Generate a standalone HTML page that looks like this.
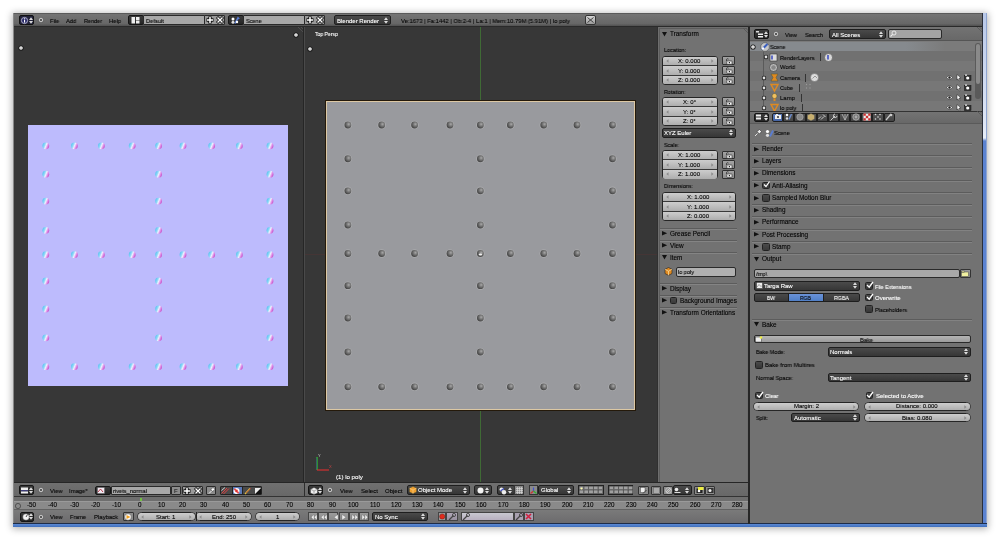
<!DOCTYPE html>
<html><head><meta charset="utf-8"><style>
*{box-sizing:border-box;margin:0;padding:0}
html,body{width:1000px;height:540px;overflow:hidden;background:#fff}
body{font-family:"Liberation Sans",sans-serif;font-size:6px;color:#000;position:relative}
.a{position:absolute}
.t{position:absolute;white-space:nowrap;line-height:1;will-change:transform;-webkit-text-stroke-width:0.1px}
svg{position:absolute;overflow:visible}
</style></head><body>
<div class="a" style="left:13px;top:13px;width:974px;height:514px;background:#888;box-shadow:0 1px 7px 1px rgba(0,0,0,.30)"></div>
<div class="a" style="left:982px;top:13px;width:1px;height:511px;background:#2a2e38;"></div>
<div class="a" style="left:983px;top:13px;width:4px;height:511px;background:linear-gradient(#b8c8e8 0,#dfe6f4 110px,#e8eef8 125px,#5a82d0 128px,#5a82d0 100%);border-right:1px solid #8ea4d0"></div>
<div class="a" style="left:13px;top:523px;width:974px;height:1px;background:#1e2c48;"></div>
<div class="a" style="left:13px;top:524px;width:974px;height:3px;background:linear-gradient(#5d8ad4,#3f6fbd)"></div>
<div class="a" style="left:14px;top:13px;width:968px;height:510px;background:#727272;"></div>
<div class="a" style="left:14px;top:13px;width:968px;height:14px;background:linear-gradient(#747474,#676767 80%,#505050);border-top:1px solid #5a5a5a;border-bottom:1px solid #2a2a2a"></div>
<div class="a" style="left:19px;top:15px;width:15px;height:10px;background:#22223a;border:1px solid #111;border-radius:2px"></div>
<svg style="left:21px;top:16.5px" width="7" height="7"><circle cx="3.5" cy="3.5" r="3.1" fill="#2c2c6a" stroke="#c8c8e0" stroke-width="0.8"/><rect x="3" y="2.8" width="1.1" height="2.8" fill="#fff"/><rect x="3" y="1.3" width="1.1" height="1" fill="#fff"/></svg>
<svg style="left:29px;top:16.5px" width="4" height="7"><path d="M0 3 L2 0.3 L4 3Z M0 4 L2 6.7 L4 4Z" fill="#ddd"/></svg>
<svg style="left:37px;top:16.2px" width="8" height="8"><circle cx="4" cy="4" r="2.6" fill="#3a3a3a" opacity="0.5"/><circle cx="4" cy="4" r="1.8" fill="#5a5a5a" stroke="#e0e0e0" stroke-width="0.9"/></svg>
<div class="t" style="left:50.00px;top:17.92px;font-size:6px;color:#000;transform:scaleX(0.951);transform-origin:0 0;">File</div>
<div class="t" style="left:66.40px;top:17.92px;font-size:6px;color:#000;transform:scaleX(0.954);transform-origin:0 0;">Add</div>
<div class="t" style="left:83.80px;top:17.92px;font-size:6px;color:#000;transform:scaleX(0.914);transform-origin:0 0;">Render</div>
<div class="t" style="left:109.00px;top:17.92px;font-size:6px;color:#000;transform:scaleX(0.972);transform-origin:0 0;">Help</div>
<div class="a" style="left:128px;top:15px;width:16px;height:10px;background:linear-gradient(#3a3a3a,#262626);border:1px solid #151515;border-radius:2px;"></div>
<svg style="left:131px;top:17px" width="10" height="7"><rect x="0.5" y="0" width="3.5" height="6.5" fill="#eee"/><rect x="5" y="0" width="3.5" height="3" fill="#eee"/><rect x="5" y="3.5" width="3.5" height="3" fill="#eee"/></svg>
<div class="a" style="left:143px;top:15px;width:62px;height:10px;background:linear-gradient(#a8a8a8,#a8a8a8);border:1px solid #2a2a2a;border-radius:1px;"></div>
<div class="t" style="left:146.00px;top:17.92px;font-size:6px;color:#000;transform:scaleX(0.947);transform-origin:0 0;">Default</div>
<div class="a" style="left:204px;top:15px;width:21px;height:10px;background:linear-gradient(#9a9a9a,#9a9a9a);border:1px solid #2a2a2a;border-radius:1px;"></div>
<svg style="left:204.5px;top:14.5px" width="10" height="10"><path d="M5 1.5V8.5M1.5 5H8.5" stroke="#111" stroke-width="3.4"/><path d="M5 2V8M2 5H8" stroke="#fff" stroke-width="1.5"/></svg>
<svg style="left:214.5px;top:14.5px" width="10" height="10"><path d="M2 2L8 8M8 2L2 8" stroke="#111" stroke-width="3"/><path d="M2.5 2.5L7.5 7.5M7.5 2.5L2.5 7.5" stroke="#fff" stroke-width="1.4"/></svg>
<div class="a" style="left:228px;top:15px;width:16px;height:10px;background:linear-gradient(#3a3a3a,#262626);border:1px solid #151515;border-radius:2px;"></div>
<svg style="left:231px;top:16.5px" width="9" height="7"><circle cx="2" cy="2" r="1.5" fill="#fff"/><circle cx="2" cy="5.3" r="1.5" fill="#ddd"/><path d="M4 6.5L7 0.8L8.2 2" stroke="#5a7cd0" stroke-width="1.6" fill="none"/><circle cx="6" cy="5" r="1.2" fill="#fff"/></svg>
<div class="a" style="left:243px;top:15px;width:62px;height:10px;background:linear-gradient(#a8a8a8,#a8a8a8);border:1px solid #2a2a2a;border-radius:1px;"></div>
<div class="t" style="left:246.00px;top:17.92px;font-size:6px;color:#000;transform:scaleX(0.917);transform-origin:0 0;">Scene</div>
<div class="a" style="left:304px;top:15px;width:21px;height:10px;background:linear-gradient(#9a9a9a,#9a9a9a);border:1px solid #2a2a2a;border-radius:1px;"></div>
<svg style="left:304.5px;top:14.5px" width="10" height="10"><path d="M5 1.5V8.5M1.5 5H8.5" stroke="#111" stroke-width="3.4"/><path d="M5 2V8M2 5H8" stroke="#fff" stroke-width="1.5"/></svg>
<svg style="left:314.5px;top:14.5px" width="10" height="10"><path d="M2 2L8 8M8 2L2 8" stroke="#111" stroke-width="3"/><path d="M2.5 2.5L7.5 7.5M7.5 2.5L2.5 7.5" stroke="#fff" stroke-width="1.4"/></svg>
<div class="a" style="left:334px;top:15px;width:57px;height:10px;background:linear-gradient(#4a4a4a,#363636);border:1px solid #1e1e1e;border-radius:2px;"></div>
<svg style="left:384px;top:16.5px" width="4" height="7"><path d="M0 3 L2 0.3 L4 3Z M0 4 L2 6.7 L4 4Z" fill="#ddd"/></svg>
<div class="t" style="left:336.50px;top:17.62px;font-size:6px;color:#fff;">Blender Render</div>
<div class="t" style="left:400.80px;top:17.92px;font-size:6px;color:#000;transform:scaleX(0.974);transform-origin:0 0;">Ve:1673 | Fa:1442 | Ob:2-4 | La:1 | Mem:10.79M (5.91M) | lo poly</div>
<div class="a" style="left:585px;top:15px;width:11px;height:10px;background:linear-gradient(#d8d8d8,#9a9a9a);border:1px solid #333;border-radius:2px"></div>
<svg style="left:587px;top:17px" width="7" height="6"><path d="M0.5 5.5L6.5 0.5M0.5 0.5L6.5 5.5" stroke="#333" stroke-width="0.9"/></svg>
<div class="a" style="left:14px;top:27px;width:290px;height:456px;background:#373737;"></div>
<svg style="left:17px;top:44.3px" width="8" height="8"><circle cx="4" cy="4" r="2.6" fill="#111"/><circle cx="4" cy="4" r="1.8" fill="#fafafa"/><circle cx="4" cy="4" r="0.5" fill="#444"/></svg>
<svg style="left:291.6px;top:30.700000000000003px" width="8" height="8"><circle cx="4" cy="4" r="2.6" fill="#111"/><circle cx="4" cy="4" r="1.8" fill="#fafafa"/><circle cx="4" cy="4" r="0.5" fill="#444"/></svg>
<svg style="left:296px;top:27px" width="8" height="8"><path d="M2 0L7.5 5.5M5 0L7.5 2.5" stroke="#555" stroke-width="0.8"/></svg>
<div class="a" style="left:28px;top:125px;width:260px;height:261px;background:#bdbbfd;"></div>
<svg style="left:0;top:0" width="1000" height="540"><defs><linearGradient id="rv" x1="0" y1="0.35" x2="1" y2="0.75"><stop offset="0" stop-color="#58c4f0"/><stop offset="0.3" stop-color="#90d8f8"/><stop offset="0.5" stop-color="#f0f0ff"/><stop offset="0.72" stop-color="#e090e8"/><stop offset="1" stop-color="#c040c0"/></linearGradient><radialGradient id="rg" cx="0.62" cy="0.38" r="0.75"><stop offset="0" stop-color="#a8a8a8"/><stop offset="0.35" stop-color="#7a7a7a"/><stop offset="0.8" stop-color="#484848"/><stop offset="1" stop-color="#3c3c3c"/></radialGradient></defs>
<circle cx="45.8" cy="145.8" r="3.4" fill="url(#rv)"/><circle cx="74.4" cy="145.8" r="3.4" fill="url(#rv)"/><circle cx="101.4" cy="145.8" r="3.4" fill="url(#rv)"/><circle cx="132.2" cy="145.8" r="3.4" fill="url(#rv)"/><circle cx="158.6" cy="145.8" r="3.4" fill="url(#rv)"/><circle cx="183" cy="145.8" r="3.4" fill="url(#rv)"/><circle cx="211.7" cy="145.8" r="3.4" fill="url(#rv)"/><circle cx="239.4" cy="145.8" r="3.4" fill="url(#rv)"/><circle cx="270" cy="145.8" r="3.4" fill="url(#rv)"/><circle cx="45.8" cy="174.2" r="3.4" fill="url(#rv)"/><circle cx="158.6" cy="174.2" r="3.4" fill="url(#rv)"/><circle cx="270" cy="174.2" r="3.4" fill="url(#rv)"/><circle cx="45.8" cy="201.1" r="3.4" fill="url(#rv)"/><circle cx="158.6" cy="201.1" r="3.4" fill="url(#rv)"/><circle cx="270" cy="201.1" r="3.4" fill="url(#rv)"/><circle cx="45.8" cy="230.3" r="3.4" fill="url(#rv)"/><circle cx="158.6" cy="230.3" r="3.4" fill="url(#rv)"/><circle cx="270" cy="230.3" r="3.4" fill="url(#rv)"/><circle cx="45.8" cy="254.7" r="3.4" fill="url(#rv)"/><circle cx="74.4" cy="254.7" r="3.4" fill="url(#rv)"/><circle cx="101.4" cy="254.7" r="3.4" fill="url(#rv)"/><circle cx="132.2" cy="254.7" r="3.4" fill="url(#rv)"/><circle cx="158.6" cy="254.7" r="3.4" fill="url(#rv)"/><circle cx="183" cy="254.7" r="3.4" fill="url(#rv)"/><circle cx="211.7" cy="254.7" r="3.4" fill="url(#rv)"/><circle cx="239.4" cy="254.7" r="3.4" fill="url(#rv)"/><circle cx="270" cy="254.7" r="3.4" fill="url(#rv)"/><circle cx="45.8" cy="281" r="3.4" fill="url(#rv)"/><circle cx="158.6" cy="281" r="3.4" fill="url(#rv)"/><circle cx="270" cy="281" r="3.4" fill="url(#rv)"/><circle cx="45.8" cy="309" r="3.4" fill="url(#rv)"/><circle cx="158.6" cy="309" r="3.4" fill="url(#rv)"/><circle cx="270" cy="309" r="3.4" fill="url(#rv)"/><circle cx="45.8" cy="337.8" r="3.4" fill="url(#rv)"/><circle cx="158.6" cy="337.8" r="3.4" fill="url(#rv)"/><circle cx="270" cy="337.8" r="3.4" fill="url(#rv)"/><circle cx="45.8" cy="366.7" r="3.4" fill="url(#rv)"/><circle cx="74.4" cy="366.7" r="3.4" fill="url(#rv)"/><circle cx="101.4" cy="366.7" r="3.4" fill="url(#rv)"/><circle cx="132.2" cy="366.7" r="3.4" fill="url(#rv)"/><circle cx="158.6" cy="366.7" r="3.4" fill="url(#rv)"/><circle cx="183" cy="366.7" r="3.4" fill="url(#rv)"/><circle cx="211.7" cy="366.7" r="3.4" fill="url(#rv)"/><circle cx="239.4" cy="366.7" r="3.4" fill="url(#rv)"/><circle cx="270" cy="366.7" r="3.4" fill="url(#rv)"/></svg>
<div class="a" style="left:303px;top:27px;width:3px;height:456px;background:#2a2a2a;border-left:1px solid #262626;border-right:1px solid #262626;background:#4a4a4a"></div>
<div class="a" style="left:305px;top:27px;width:352px;height:456px;background:#373737;"></div>
<div class="a" style="left:480.2px;top:27px;width:1.3px;height:456px;background:#3f6a35;"></div>
<div class="a" style="left:305px;top:254px;width:352px;height:1px;background:rgba(120,50,50,.22);"></div>
<div class="t" style="left:315.00px;top:31.22px;font-size:6px;color:#fff;transform:scaleX(0.844);transform-origin:0 0;">Top Persp</div>
<svg style="left:306.2px;top:44.7px" width="8" height="8"><circle cx="4" cy="4" r="2.6" fill="#111"/><circle cx="4" cy="4" r="1.8" fill="#fafafa"/><circle cx="4" cy="4" r="0.5" fill="#444"/></svg>
<div class="a" style="left:325px;top:100px;width:311px;height:311px;background:#999a9e;border:1px solid #24190a;box-shadow:inset 0 0 0 1px #dcc8a4"></div>
<svg style="left:0;top:0" width="1000" height="540"><circle cx="347.9" cy="125" r="4.3" fill="#c4c4c4" opacity="0.4"/><circle cx="347.9" cy="125" r="3.4" fill="url(#rg)"/><circle cx="381.7" cy="125" r="4.3" fill="#c4c4c4" opacity="0.4"/><circle cx="381.7" cy="125" r="3.4" fill="url(#rg)"/><circle cx="414.6" cy="125" r="4.3" fill="#c4c4c4" opacity="0.4"/><circle cx="414.6" cy="125" r="3.4" fill="url(#rg)"/><circle cx="450" cy="125" r="4.3" fill="#c4c4c4" opacity="0.4"/><circle cx="450" cy="125" r="3.4" fill="url(#rg)"/><circle cx="480.4" cy="125" r="4.3" fill="#c4c4c4" opacity="0.4"/><circle cx="480.4" cy="125" r="3.4" fill="url(#rg)"/><circle cx="510.4" cy="125" r="4.3" fill="#c4c4c4" opacity="0.4"/><circle cx="510.4" cy="125" r="3.4" fill="url(#rg)"/><circle cx="543.75" cy="125" r="4.3" fill="#c4c4c4" opacity="0.4"/><circle cx="543.75" cy="125" r="3.4" fill="url(#rg)"/><circle cx="577" cy="125" r="4.3" fill="#c4c4c4" opacity="0.4"/><circle cx="577" cy="125" r="3.4" fill="url(#rg)"/><circle cx="612.5" cy="125" r="4.3" fill="#c4c4c4" opacity="0.4"/><circle cx="612.5" cy="125" r="3.4" fill="url(#rg)"/><circle cx="347.9" cy="158.75" r="4.3" fill="#c4c4c4" opacity="0.4"/><circle cx="347.9" cy="158.75" r="3.4" fill="url(#rg)"/><circle cx="480.4" cy="158.75" r="4.3" fill="#c4c4c4" opacity="0.4"/><circle cx="480.4" cy="158.75" r="3.4" fill="url(#rg)"/><circle cx="612.5" cy="158.75" r="4.3" fill="#c4c4c4" opacity="0.4"/><circle cx="612.5" cy="158.75" r="3.4" fill="url(#rg)"/><circle cx="347.9" cy="190.8" r="4.3" fill="#c4c4c4" opacity="0.4"/><circle cx="347.9" cy="190.8" r="3.4" fill="url(#rg)"/><circle cx="480.4" cy="190.8" r="4.3" fill="#c4c4c4" opacity="0.4"/><circle cx="480.4" cy="190.8" r="3.4" fill="url(#rg)"/><circle cx="612.5" cy="190.8" r="4.3" fill="#c4c4c4" opacity="0.4"/><circle cx="612.5" cy="190.8" r="3.4" fill="url(#rg)"/><circle cx="347.9" cy="225" r="4.3" fill="#c4c4c4" opacity="0.4"/><circle cx="347.9" cy="225" r="3.4" fill="url(#rg)"/><circle cx="480.4" cy="225" r="4.3" fill="#c4c4c4" opacity="0.4"/><circle cx="480.4" cy="225" r="3.4" fill="url(#rg)"/><circle cx="612.5" cy="225" r="4.3" fill="#c4c4c4" opacity="0.4"/><circle cx="612.5" cy="225" r="3.4" fill="url(#rg)"/><circle cx="347.9" cy="253.5" r="4.3" fill="#c4c4c4" opacity="0.4"/><circle cx="347.9" cy="253.5" r="3.4" fill="url(#rg)"/><circle cx="381.7" cy="253.5" r="4.3" fill="#c4c4c4" opacity="0.4"/><circle cx="381.7" cy="253.5" r="3.4" fill="url(#rg)"/><circle cx="414.6" cy="253.5" r="4.3" fill="#c4c4c4" opacity="0.4"/><circle cx="414.6" cy="253.5" r="3.4" fill="url(#rg)"/><circle cx="450" cy="253.5" r="4.3" fill="#c4c4c4" opacity="0.4"/><circle cx="450" cy="253.5" r="3.4" fill="url(#rg)"/><circle cx="480.4" cy="253.5" r="4.3" fill="#c4c4c4" opacity="0.4"/><circle cx="480.4" cy="253.5" r="3.4" fill="url(#rg)"/><circle cx="510.4" cy="253.5" r="4.3" fill="#c4c4c4" opacity="0.4"/><circle cx="510.4" cy="253.5" r="3.4" fill="url(#rg)"/><circle cx="543.75" cy="253.5" r="4.3" fill="#c4c4c4" opacity="0.4"/><circle cx="543.75" cy="253.5" r="3.4" fill="url(#rg)"/><circle cx="577" cy="253.5" r="4.3" fill="#c4c4c4" opacity="0.4"/><circle cx="577" cy="253.5" r="3.4" fill="url(#rg)"/><circle cx="612.5" cy="253.5" r="4.3" fill="#c4c4c4" opacity="0.4"/><circle cx="612.5" cy="253.5" r="3.4" fill="url(#rg)"/><circle cx="347.9" cy="285.7" r="4.3" fill="#c4c4c4" opacity="0.4"/><circle cx="347.9" cy="285.7" r="3.4" fill="url(#rg)"/><circle cx="480.4" cy="285.7" r="4.3" fill="#c4c4c4" opacity="0.4"/><circle cx="480.4" cy="285.7" r="3.4" fill="url(#rg)"/><circle cx="612.5" cy="285.7" r="4.3" fill="#c4c4c4" opacity="0.4"/><circle cx="612.5" cy="285.7" r="3.4" fill="url(#rg)"/><circle cx="347.9" cy="318" r="4.3" fill="#c4c4c4" opacity="0.4"/><circle cx="347.9" cy="318" r="3.4" fill="url(#rg)"/><circle cx="480.4" cy="318" r="4.3" fill="#c4c4c4" opacity="0.4"/><circle cx="480.4" cy="318" r="3.4" fill="url(#rg)"/><circle cx="612.5" cy="318" r="4.3" fill="#c4c4c4" opacity="0.4"/><circle cx="612.5" cy="318" r="3.4" fill="url(#rg)"/><circle cx="347.9" cy="352" r="4.3" fill="#c4c4c4" opacity="0.4"/><circle cx="347.9" cy="352" r="3.4" fill="url(#rg)"/><circle cx="480.4" cy="352" r="4.3" fill="#c4c4c4" opacity="0.4"/><circle cx="480.4" cy="352" r="3.4" fill="url(#rg)"/><circle cx="612.5" cy="352" r="4.3" fill="#c4c4c4" opacity="0.4"/><circle cx="612.5" cy="352" r="3.4" fill="url(#rg)"/><circle cx="347.9" cy="386.8" r="4.3" fill="#c4c4c4" opacity="0.4"/><circle cx="347.9" cy="386.8" r="3.4" fill="url(#rg)"/><circle cx="381.7" cy="386.8" r="4.3" fill="#c4c4c4" opacity="0.4"/><circle cx="381.7" cy="386.8" r="3.4" fill="url(#rg)"/><circle cx="414.6" cy="386.8" r="4.3" fill="#c4c4c4" opacity="0.4"/><circle cx="414.6" cy="386.8" r="3.4" fill="url(#rg)"/><circle cx="450" cy="386.8" r="4.3" fill="#c4c4c4" opacity="0.4"/><circle cx="450" cy="386.8" r="3.4" fill="url(#rg)"/><circle cx="480.4" cy="386.8" r="4.3" fill="#c4c4c4" opacity="0.4"/><circle cx="480.4" cy="386.8" r="3.4" fill="url(#rg)"/><circle cx="510.4" cy="386.8" r="4.3" fill="#c4c4c4" opacity="0.4"/><circle cx="510.4" cy="386.8" r="3.4" fill="url(#rg)"/><circle cx="543.75" cy="386.8" r="4.3" fill="#c4c4c4" opacity="0.4"/><circle cx="543.75" cy="386.8" r="3.4" fill="url(#rg)"/><circle cx="577" cy="386.8" r="4.3" fill="#c4c4c4" opacity="0.4"/><circle cx="577" cy="386.8" r="3.4" fill="url(#rg)"/><circle cx="612.5" cy="386.8" r="4.3" fill="#c4c4c4" opacity="0.4"/><circle cx="612.5" cy="386.8" r="3.4" fill="url(#rg)"/><ellipse cx="480.4" cy="254.6" rx="1.8" ry="1" fill="#f0f0f0"/></svg>
<svg style="left:310px;top:452px" width="30" height="22"><path d="M7 5V18" stroke="#2fc02f" stroke-width="1.3"/><path d="M7 18H19" stroke="#c83030" stroke-width="1.3"/><path d="M6.5 17.5L6.5 6" stroke="#3a3aa0" stroke-width="0.5"/><text x="8" y="5" font-size="4" fill="#ccc" font-family="Liberation Sans">Y</text><text x="19" y="16" font-size="4" fill="#c44" font-family="Liberation Sans">X</text></svg>
<div class="t" style="left:336.00px;top:473.92px;font-size:6px;color:#fff;transform:scaleX(1.017);transform-origin:0 0;">(1) lo poly</div>
<div class="a" style="left:657px;top:27px;width:91px;height:456px;background:#6e6e6e;border-left:1px solid #303030"></div>
<div class="a" style="left:659px;top:28px;width:88px;height:455px;background:#727272;border-left:1px solid #5c5c5c;border-top:1px solid #5c5c5c;"></div>
<div class="t" style="left:670.00px;top:31.28px;font-size:6.4px;color:#000;">Transform</div>
<svg style="left:662px;top:32.3px" width="6" height="5"><path d="M0 0H5L2.5 4.4Z" fill="#111"/></svg>
<div class="t" style="left:664.00px;top:47.32px;font-size:6px;color:#000;transform:scaleX(0.911);transform-origin:0 0;">Location:</div>
<div class="a" style="left:661.5px;top:55.8px;width:56px;height:29.099999999999998px;background:#b9b9b9;border:1px solid #262626;border-radius:3px;overflow:hidden"></div>
<div class="a" style="left:662.5px;top:56.8px;width:54px;height:8.7px;background:linear-gradient(#cdcdcd,#aeaeae);border-radius:2px 2px 0 0;"></div>
<svg style="left:665.5px;top:58.85px" width="3" height="4"><path d="M2.5 0.2 L0.3 2 L2.5 3.8Z" fill="#8a8a8a"/></svg>
<svg style="left:711.0px;top:58.85px" width="3" height="4"><path d="M0.3 0.2 L2.5 2 L0.3 3.8Z" fill="#8a8a8a"/></svg>
<div class="t" style="left:678.32px;top:57.82px;font-size:6px;color:#000;">X: 0.000</div>
<div class="a" style="left:662.5px;top:66.0px;width:54px;height:8.7px;background:linear-gradient(#cdcdcd,#aeaeae);"></div>
<div class="a" style="left:662.5px;top:65.0px;width:54px;height:1px;background:#3a3a3a;"></div>
<svg style="left:665.5px;top:68.55px" width="3" height="4"><path d="M2.5 0.2 L0.3 2 L2.5 3.8Z" fill="#8a8a8a"/></svg>
<svg style="left:711.0px;top:68.55px" width="3" height="4"><path d="M0.3 0.2 L2.5 2 L0.3 3.8Z" fill="#8a8a8a"/></svg>
<div class="t" style="left:678.48px;top:67.52px;font-size:6px;color:#000;">Y: 0.000</div>
<div class="a" style="left:662.5px;top:75.69999999999999px;width:54px;height:8.7px;background:linear-gradient(#cdcdcd,#aeaeae);border-radius:0 0 2px 2px;"></div>
<div class="a" style="left:662.5px;top:74.69999999999999px;width:54px;height:1px;background:#3a3a3a;"></div>
<svg style="left:665.5px;top:78.24999999999999px" width="3" height="4"><path d="M2.5 0.2 L0.3 2 L2.5 3.8Z" fill="#8a8a8a"/></svg>
<svg style="left:711.0px;top:78.24999999999999px" width="3" height="4"><path d="M0.3 0.2 L2.5 2 L0.3 3.8Z" fill="#8a8a8a"/></svg>
<div class="t" style="left:678.49px;top:77.22px;font-size:6px;color:#000;">Z: 0.000</div>
<div class="a" style="left:722px;top:56.3px;width:13px;height:8.899999999999999px;background:linear-gradient(#a4a4a4,#8c8c8c);border:1px solid #303030;border-radius:1px"></div>
<svg style="left:725px;top:57.599999999999994px" width="8" height="7"><path d="M1.5 3V1.6C1.5 0.6 3 0.3 3.6 1.2" stroke="#222" stroke-width="0.7" fill="none"/><rect x="1.8" y="3" width="5.2" height="3.3" rx="0.6" fill="#f4f4f4" stroke="#222" stroke-width="0.6"/><rect x="3.8" y="4" width="1.2" height="1.2" fill="#222"/></svg>
<div class="a" style="left:722px;top:66.0px;width:13px;height:8.899999999999999px;background:linear-gradient(#a4a4a4,#8c8c8c);border:1px solid #303030;border-radius:1px"></div>
<svg style="left:725px;top:67.3px" width="8" height="7"><path d="M1.5 3V1.6C1.5 0.6 3 0.3 3.6 1.2" stroke="#222" stroke-width="0.7" fill="none"/><rect x="1.8" y="3" width="5.2" height="3.3" rx="0.6" fill="#f4f4f4" stroke="#222" stroke-width="0.6"/><rect x="3.8" y="4" width="1.2" height="1.2" fill="#222"/></svg>
<div class="a" style="left:722px;top:75.69999999999999px;width:13px;height:8.899999999999999px;background:linear-gradient(#a4a4a4,#8c8c8c);border:1px solid #303030;border-radius:1px"></div>
<svg style="left:725px;top:76.99999999999999px" width="8" height="7"><path d="M1.5 3V1.6C1.5 0.6 3 0.3 3.6 1.2" stroke="#222" stroke-width="0.7" fill="none"/><rect x="1.8" y="3" width="5.2" height="3.3" rx="0.6" fill="#f4f4f4" stroke="#222" stroke-width="0.6"/><rect x="3.8" y="4" width="1.2" height="1.2" fill="#222"/></svg>
<div class="t" style="left:664.00px;top:88.72px;font-size:6px;color:#000;transform:scaleX(0.895);transform-origin:0 0;">Rotation:</div>
<div class="a" style="left:661.5px;top:96.8px;width:56px;height:29.099999999999998px;background:#b9b9b9;border:1px solid #262626;border-radius:3px;overflow:hidden"></div>
<div class="a" style="left:662.5px;top:97.8px;width:54px;height:8.7px;background:linear-gradient(#cdcdcd,#aeaeae);border-radius:2px 2px 0 0;"></div>
<svg style="left:665.5px;top:99.85px" width="3" height="4"><path d="M2.5 0.2 L0.3 2 L2.5 3.8Z" fill="#8a8a8a"/></svg>
<svg style="left:711.0px;top:99.85px" width="3" height="4"><path d="M0.3 0.2 L2.5 2 L0.3 3.8Z" fill="#8a8a8a"/></svg>
<div class="t" style="left:682.96px;top:98.82px;font-size:6px;color:#000;">X: 0°</div>
<div class="a" style="left:662.5px;top:107.0px;width:54px;height:8.7px;background:linear-gradient(#cdcdcd,#aeaeae);"></div>
<div class="a" style="left:662.5px;top:106.0px;width:54px;height:1px;background:#3a3a3a;"></div>
<svg style="left:665.5px;top:109.55px" width="3" height="4"><path d="M2.5 0.2 L0.3 2 L2.5 3.8Z" fill="#8a8a8a"/></svg>
<svg style="left:711.0px;top:109.55px" width="3" height="4"><path d="M0.3 0.2 L2.5 2 L0.3 3.8Z" fill="#8a8a8a"/></svg>
<div class="t" style="left:683.12px;top:108.52px;font-size:6px;color:#000;">Y: 0°</div>
<div class="a" style="left:662.5px;top:116.69999999999999px;width:54px;height:8.7px;background:linear-gradient(#cdcdcd,#aeaeae);border-radius:0 0 2px 2px;"></div>
<div class="a" style="left:662.5px;top:115.69999999999999px;width:54px;height:1px;background:#3a3a3a;"></div>
<svg style="left:665.5px;top:119.24999999999999px" width="3" height="4"><path d="M2.5 0.2 L0.3 2 L2.5 3.8Z" fill="#8a8a8a"/></svg>
<svg style="left:711.0px;top:119.24999999999999px" width="3" height="4"><path d="M0.3 0.2 L2.5 2 L0.3 3.8Z" fill="#8a8a8a"/></svg>
<div class="t" style="left:683.12px;top:118.22px;font-size:6px;color:#000;">Z: 0°</div>
<div class="a" style="left:722px;top:97.3px;width:13px;height:8.899999999999999px;background:linear-gradient(#a4a4a4,#8c8c8c);border:1px solid #303030;border-radius:1px"></div>
<svg style="left:725px;top:98.6px" width="8" height="7"><path d="M1.5 3V1.6C1.5 0.6 3 0.3 3.6 1.2" stroke="#222" stroke-width="0.7" fill="none"/><rect x="1.8" y="3" width="5.2" height="3.3" rx="0.6" fill="#f4f4f4" stroke="#222" stroke-width="0.6"/><rect x="3.8" y="4" width="1.2" height="1.2" fill="#222"/></svg>
<div class="a" style="left:722px;top:107.0px;width:13px;height:8.899999999999999px;background:linear-gradient(#a4a4a4,#8c8c8c);border:1px solid #303030;border-radius:1px"></div>
<svg style="left:725px;top:108.3px" width="8" height="7"><path d="M1.5 3V1.6C1.5 0.6 3 0.3 3.6 1.2" stroke="#222" stroke-width="0.7" fill="none"/><rect x="1.8" y="3" width="5.2" height="3.3" rx="0.6" fill="#f4f4f4" stroke="#222" stroke-width="0.6"/><rect x="3.8" y="4" width="1.2" height="1.2" fill="#222"/></svg>
<div class="a" style="left:722px;top:116.69999999999999px;width:13px;height:8.899999999999999px;background:linear-gradient(#a4a4a4,#8c8c8c);border:1px solid #303030;border-radius:1px"></div>
<svg style="left:725px;top:117.99999999999999px" width="8" height="7"><path d="M1.5 3V1.6C1.5 0.6 3 0.3 3.6 1.2" stroke="#222" stroke-width="0.7" fill="none"/><rect x="1.8" y="3" width="5.2" height="3.3" rx="0.6" fill="#f4f4f4" stroke="#222" stroke-width="0.6"/><rect x="3.8" y="4" width="1.2" height="1.2" fill="#222"/></svg>
<div class="a" style="left:661.7px;top:128.3px;width:74px;height:9.3px;background:linear-gradient(#4a4a4a,#363636);border:1px solid #1e1e1e;border-radius:2px;"></div>
<svg style="left:728.7px;top:129.45000000000002px" width="4" height="7"><path d="M0 3 L2 0.3 L4 3Z M0 4 L2 6.7 L4 4Z" fill="#ddd"/></svg>
<div class="t" style="left:664.00px;top:130.22px;font-size:6px;color:#fff;">XYZ Euler</div>
<div class="t" style="left:664.00px;top:142.12px;font-size:6px;color:#000;transform:scaleX(0.899);transform-origin:0 0;">Scale:</div>
<div class="a" style="left:661.5px;top:150px;width:56px;height:29.099999999999998px;background:#b9b9b9;border:1px solid #262626;border-radius:3px;overflow:hidden"></div>
<div class="a" style="left:662.5px;top:151.0px;width:54px;height:8.7px;background:linear-gradient(#cdcdcd,#aeaeae);border-radius:2px 2px 0 0;"></div>
<svg style="left:665.5px;top:153.04999999999998px" width="3" height="4"><path d="M2.5 0.2 L0.3 2 L2.5 3.8Z" fill="#8a8a8a"/></svg>
<svg style="left:711.0px;top:153.04999999999998px" width="3" height="4"><path d="M0.3 0.2 L2.5 2 L0.3 3.8Z" fill="#8a8a8a"/></svg>
<div class="t" style="left:678.32px;top:152.02px;font-size:6px;color:#000;">X: 1.000</div>
<div class="a" style="left:662.5px;top:160.2px;width:54px;height:8.7px;background:linear-gradient(#cdcdcd,#aeaeae);"></div>
<div class="a" style="left:662.5px;top:159.2px;width:54px;height:1px;background:#3a3a3a;"></div>
<svg style="left:665.5px;top:162.74999999999997px" width="3" height="4"><path d="M2.5 0.2 L0.3 2 L2.5 3.8Z" fill="#8a8a8a"/></svg>
<svg style="left:711.0px;top:162.74999999999997px" width="3" height="4"><path d="M0.3 0.2 L2.5 2 L0.3 3.8Z" fill="#8a8a8a"/></svg>
<div class="t" style="left:678.48px;top:161.72px;font-size:6px;color:#000;">Y: 1.000</div>
<div class="a" style="left:662.5px;top:169.9px;width:54px;height:8.7px;background:linear-gradient(#cdcdcd,#aeaeae);border-radius:0 0 2px 2px;"></div>
<div class="a" style="left:662.5px;top:168.9px;width:54px;height:1px;background:#3a3a3a;"></div>
<svg style="left:665.5px;top:172.45px" width="3" height="4"><path d="M2.5 0.2 L0.3 2 L2.5 3.8Z" fill="#8a8a8a"/></svg>
<svg style="left:711.0px;top:172.45px" width="3" height="4"><path d="M0.3 0.2 L2.5 2 L0.3 3.8Z" fill="#8a8a8a"/></svg>
<div class="t" style="left:678.49px;top:171.42px;font-size:6px;color:#000;">Z: 1.000</div>
<div class="a" style="left:722px;top:150.5px;width:13px;height:8.899999999999999px;background:linear-gradient(#a4a4a4,#8c8c8c);border:1px solid #303030;border-radius:1px"></div>
<svg style="left:725px;top:151.8px" width="8" height="7"><path d="M1.5 3V1.6C1.5 0.6 3 0.3 3.6 1.2" stroke="#222" stroke-width="0.7" fill="none"/><rect x="1.8" y="3" width="5.2" height="3.3" rx="0.6" fill="#f4f4f4" stroke="#222" stroke-width="0.6"/><rect x="3.8" y="4" width="1.2" height="1.2" fill="#222"/></svg>
<div class="a" style="left:722px;top:160.2px;width:13px;height:8.899999999999999px;background:linear-gradient(#a4a4a4,#8c8c8c);border:1px solid #303030;border-radius:1px"></div>
<svg style="left:725px;top:161.5px" width="8" height="7"><path d="M1.5 3V1.6C1.5 0.6 3 0.3 3.6 1.2" stroke="#222" stroke-width="0.7" fill="none"/><rect x="1.8" y="3" width="5.2" height="3.3" rx="0.6" fill="#f4f4f4" stroke="#222" stroke-width="0.6"/><rect x="3.8" y="4" width="1.2" height="1.2" fill="#222"/></svg>
<div class="a" style="left:722px;top:169.9px;width:13px;height:8.899999999999999px;background:linear-gradient(#a4a4a4,#8c8c8c);border:1px solid #303030;border-radius:1px"></div>
<svg style="left:725px;top:171.20000000000002px" width="8" height="7"><path d="M1.5 3V1.6C1.5 0.6 3 0.3 3.6 1.2" stroke="#222" stroke-width="0.7" fill="none"/><rect x="1.8" y="3" width="5.2" height="3.3" rx="0.6" fill="#f4f4f4" stroke="#222" stroke-width="0.6"/><rect x="3.8" y="4" width="1.2" height="1.2" fill="#222"/></svg>
<div class="t" style="left:664.00px;top:183.42px;font-size:6px;color:#000;transform:scaleX(0.878);transform-origin:0 0;">Dimensions:</div>
<div class="a" style="left:661.5px;top:191.8px;width:74px;height:29.099999999999998px;background:#b9b9b9;border:1px solid #262626;border-radius:3px;overflow:hidden"></div>
<div class="a" style="left:662.5px;top:192.8px;width:72px;height:8.7px;background:linear-gradient(#cdcdcd,#aeaeae);border-radius:2px 2px 0 0;"></div>
<svg style="left:665.5px;top:194.85px" width="3" height="4"><path d="M2.5 0.2 L0.3 2 L2.5 3.8Z" fill="#8a8a8a"/></svg>
<svg style="left:729.0px;top:194.85px" width="3" height="4"><path d="M0.3 0.2 L2.5 2 L0.3 3.8Z" fill="#8a8a8a"/></svg>
<div class="t" style="left:687.32px;top:193.82px;font-size:6px;color:#000;">X: 1.000</div>
<div class="a" style="left:662.5px;top:202.0px;width:72px;height:8.7px;background:linear-gradient(#cdcdcd,#aeaeae);"></div>
<div class="a" style="left:662.5px;top:201.0px;width:72px;height:1px;background:#3a3a3a;"></div>
<svg style="left:665.5px;top:204.54999999999998px" width="3" height="4"><path d="M2.5 0.2 L0.3 2 L2.5 3.8Z" fill="#8a8a8a"/></svg>
<svg style="left:729.0px;top:204.54999999999998px" width="3" height="4"><path d="M0.3 0.2 L2.5 2 L0.3 3.8Z" fill="#8a8a8a"/></svg>
<div class="t" style="left:687.48px;top:203.52px;font-size:6px;color:#000;">Y: 1.000</div>
<div class="a" style="left:662.5px;top:211.70000000000002px;width:72px;height:8.7px;background:linear-gradient(#cdcdcd,#aeaeae);border-radius:0 0 2px 2px;"></div>
<div class="a" style="left:662.5px;top:210.70000000000002px;width:72px;height:1px;background:#3a3a3a;"></div>
<svg style="left:665.5px;top:214.25px" width="3" height="4"><path d="M2.5 0.2 L0.3 2 L2.5 3.8Z" fill="#8a8a8a"/></svg>
<svg style="left:729.0px;top:214.25px" width="3" height="4"><path d="M0.3 0.2 L2.5 2 L0.3 3.8Z" fill="#8a8a8a"/></svg>
<div class="t" style="left:687.49px;top:213.22px;font-size:6px;color:#000;">Z: 0.000</div>
<div class="a" style="left:660px;top:227.5px;width:77px;height:1px;background:#5c5c5c;"></div>
<div class="a" style="left:660px;top:228.5px;width:77px;height:1px;background:#848484;"></div>
<svg style="left:662px;top:231.2px" width="6" height="5"><path d="M0 0V4.6L5.2 2.3Z" fill="#111"/></svg>
<div class="t" style="left:670.00px;top:230.58px;font-size:6.4px;color:#000;">Grease Pencil</div>
<div class="a" style="left:660px;top:239.5px;width:77px;height:1px;background:#5c5c5c;"></div>
<div class="a" style="left:660px;top:240.5px;width:77px;height:1px;background:#848484;"></div>
<svg style="left:662px;top:243.2px" width="6" height="5"><path d="M0 0V4.6L5.2 2.3Z" fill="#111"/></svg>
<div class="t" style="left:670.00px;top:242.58px;font-size:6.4px;color:#000;">View</div>
<div class="a" style="left:660px;top:251.5px;width:77px;height:1px;background:#5c5c5c;"></div>
<div class="a" style="left:660px;top:252.5px;width:77px;height:1px;background:#848484;"></div>
<svg style="left:662px;top:255.4px" width="6" height="5"><path d="M0 0H5L2.5 4.4Z" fill="#111"/></svg>
<div class="t" style="left:670.00px;top:254.58px;font-size:6.4px;color:#000;">Item</div>
<svg style="left:664px;top:266.5px" width="9" height="9"><path d="M4.5 0.5L8 2.3V6.5L4.5 8.4L1 6.5V2.3Z" fill="#e08a20" stroke="#222" stroke-width="0.6"/><path d="M1 2.3L4.5 4.2L8 2.3M4.5 4.2V8.4" stroke="#fff0c0" stroke-width="0.6" fill="none"/></svg>
<div class="a" style="left:675.5px;top:267px;width:60px;height:9.5px;background:linear-gradient(#b0b0b0,#b0b0b0);border:1px solid #2a2a2a;border-radius:2px;"></div>
<div class="t" style="left:678.00px;top:269.42px;font-size:6px;color:#000;transform:scaleX(0.923);transform-origin:0 0;">lo poly</div>
<div class="a" style="left:660px;top:282.5px;width:77px;height:1px;background:#5c5c5c;"></div>
<div class="a" style="left:660px;top:283.5px;width:77px;height:1px;background:#848484;"></div>
<svg style="left:662px;top:286.2px" width="6" height="5"><path d="M0 0V4.6L5.2 2.3Z" fill="#111"/></svg>
<div class="t" style="left:670.00px;top:285.58px;font-size:6.4px;color:#000;">Display</div>
<div class="a" style="left:660px;top:294.5px;width:77px;height:1px;background:#5c5c5c;"></div>
<div class="a" style="left:660px;top:295.5px;width:77px;height:1px;background:#848484;"></div>
<svg style="left:662px;top:298.2px" width="6" height="5"><path d="M0 0V4.6L5.2 2.3Z" fill="#111"/></svg>
<div class="a" style="left:669.5px;top:296.8px;width:7.5px;height:7.5px;background:linear-gradient(#4a4a4a,#3a3a3a);border:1px solid #222;border-radius:1.5px"></div>
<div class="t" style="left:680.00px;top:297.58px;font-size:6.4px;color:#000;">Background Images</div>
<div class="a" style="left:660px;top:306.5px;width:77px;height:1px;background:#5c5c5c;"></div>
<div class="a" style="left:660px;top:307.5px;width:77px;height:1px;background:#848484;"></div>
<svg style="left:662px;top:310.2px" width="6" height="5"><path d="M0 0V4.6L5.2 2.3Z" fill="#111"/></svg>
<div class="t" style="left:670.00px;top:309.58px;font-size:6.4px;color:#000;">Transform Orientations</div>
<svg style="left:742px;top:28px" width="6" height="6"><path d="M1 0L6 5M3.5 0L6 2.5" stroke="#555" stroke-width="0.8"/></svg>
<div class="a" style="left:748px;top:27px;width:2px;height:497px;background:#262626;"></div>
<div class="a" style="left:750px;top:27px;width:232px;height:14px;background:linear-gradient(#737373,#686868);border-bottom:1px solid #555"></div>
<div class="a" style="left:754px;top:29px;width:15px;height:10px;background:linear-gradient(#3a3a3a,#262626);border:1px solid #151515;border-radius:2px;"></div>
<svg style="left:756px;top:30.5px" width="8" height="7"><rect x="0" y="0" width="3" height="1.5" fill="#ddd"/><rect x="2" y="2.5" width="5" height="1.5" fill="#eee"/><rect x="2" y="5" width="5" height="1.5" fill="#eee"/></svg>
<svg style="left:763.5px;top:30.5px" width="4" height="7"><path d="M0 3 L2 0.3 L4 3Z M0 4 L2 6.7 L4 4Z" fill="#ddd"/></svg>
<svg style="left:771.5px;top:30px" width="8" height="8"><circle cx="4" cy="4" r="2.6" fill="#3a3a3a" opacity="0.5"/><circle cx="4" cy="4" r="1.8" fill="#5a5a5a" stroke="#e0e0e0" stroke-width="0.9"/></svg>
<div class="t" style="left:785.00px;top:31.92px;font-size:6px;color:#000;transform:scaleX(0.930);transform-origin:0 0;">View</div>
<div class="t" style="left:804.50px;top:31.92px;font-size:6px;color:#000;transform:scaleX(0.947);transform-origin:0 0;">Search</div>
<div class="a" style="left:829px;top:29px;width:57px;height:10px;background:linear-gradient(#4a4a4a,#363636);border:1px solid #1e1e1e;border-radius:2px;"></div>
<svg style="left:879px;top:30.5px" width="4" height="7"><path d="M0 3 L2 0.3 L4 3Z M0 4 L2 6.7 L4 4Z" fill="#ddd"/></svg>
<div class="t" style="left:832.00px;top:31.62px;font-size:6px;color:#fff;">All Scenes</div>
<div class="a" style="left:888px;top:29px;width:54px;height:9.5px;background:linear-gradient(#a4a4a4,#a4a4a4);border:1px solid #2a2a2a;border-radius:2px;"></div>
<svg style="left:890px;top:30px" width="7" height="7"><circle cx="4" cy="3" r="2" fill="none" stroke="#eee" stroke-width="0.9"/><path d="M2.6 4.4L0.5 6.5" stroke="#eee" stroke-width="1.1"/></svg>
<svg style="left:976px;top:27px" width="6" height="6"><path d="M1 0L6 5M3.5 0L6 2.5" stroke="#555" stroke-width="0.8"/></svg>
<div class="a" style="left:750px;top:41px;width:232px;height:10px;background:#7b7b7b;"></div>
<div class="a" style="left:750px;top:51px;width:232px;height:10px;background:#717171;"></div>
<div class="a" style="left:750px;top:61px;width:232px;height:10px;background:#777777;"></div>
<div class="a" style="left:750px;top:71px;width:232px;height:10px;background:#717171;"></div>
<div class="a" style="left:750px;top:81px;width:232px;height:10px;background:#777777;"></div>
<div class="a" style="left:750px;top:91px;width:232px;height:10px;background:#717171;"></div>
<div class="a" style="left:750px;top:101px;width:232px;height:10px;background:#777777;"></div>
<div class="a" style="left:750px;top:42px;width:195px;height:9px;background:linear-gradient(90deg,#868a8e,#868a8e 80%,#7b7b7b)"></div>
<div class="a" style="left:975px;top:43px;width:5.5px;height:56px;background:#5a5a5a;border-radius:3px"></div>
<div class="a" style="left:975.5px;top:43.5px;width:4.5px;height:40px;background:#8a8a8a;border-radius:2.5px"></div>
<div class="a" style="left:763px;top:52px;width:1px;height:58px;background:#5a5a5a;"></div>
<svg style="left:749.3px;top:42.5px" width="8" height="8"><circle cx="4" cy="4" r="2.6" fill="#111"/><circle cx="4" cy="4" r="1.8" fill="#fafafa"/><circle cx="4" cy="4" r="0.5" fill="#444"/></svg>
<svg style="left:760px;top:41.5px" width="10" height="10"><circle cx="5" cy="5" r="4.3" fill="#c8c8c8" stroke="#444" stroke-width="0.5"/><path d="M2 7.5L7.5 2" stroke="#3a5fc0" stroke-width="2"/><circle cx="3" cy="6.5" r="1.3" fill="#fff"/></svg>
<div class="t" style="left:770.20px;top:43.92px;font-size:6px;color:#000;transform:scaleX(0.899);transform-origin:0 0;">Scene</div>
<svg style="left:762px;top:53.4px" width="8" height="8"><circle cx="4" cy="4" r="2.2" fill="#111"/><circle cx="4" cy="4" r="1.4" fill="#fafafa"/><circle cx="4" cy="4" r="0.45" fill="#444"/></svg>
<svg style="left:769px;top:52.5px" width="9" height="9"><rect x="1" y="1" width="7" height="7" fill="#ddd" stroke="#333" stroke-width="0.6"/><path d="M3 2.5V6.5" stroke="#4050c0" stroke-width="1.6"/></svg>
<div class="t" style="left:780.20px;top:54.52px;font-size:6px;color:#000;transform:scaleX(0.915);transform-origin:0 0;">RenderLayers</div>
<div class="a" style="left:820px;top:53.1px;width:1px;height:8px;background:#333;"></div>
<svg style="left:824px;top:52.5px" width="9" height="9"><circle cx="4.5" cy="4.5" r="4" fill="#d8d8d8" stroke="#444" stroke-width="0.5"/><path d="M4 2V6.5" stroke="#4050c0" stroke-width="1.6"/></svg>
<svg style="left:769px;top:62.5px" width="9" height="9"><circle cx="4.5" cy="4.5" r="4" fill="#bbb" stroke="#333" stroke-width="0.6"/><circle cx="4.5" cy="4.5" r="2.3" fill="#888"/></svg>
<div class="t" style="left:780.20px;top:64.42px;font-size:6px;color:#000;transform:scaleX(0.964);transform-origin:0 0;">World</div>
<svg style="left:759.5px;top:73.6px" width="8" height="8"><circle cx="4" cy="4" r="2.2" fill="#111"/><circle cx="4" cy="4" r="1.4" fill="#fafafa"/><circle cx="4" cy="4" r="0.45" fill="#444"/></svg>
<svg style="left:769.5px;top:73px" width="9" height="9"><path d="M1 1H8L6 4.5L8 8H1L3 4.5Z" fill="#e08a20" stroke="#553" stroke-width="0.5"/></svg>
<div class="t" style="left:780.20px;top:74.92px;font-size:6px;color:#000;transform:scaleX(0.937);transform-origin:0 0;">Camera</div>
<div class="a" style="left:805px;top:73.5px;width:1px;height:8px;background:#333;"></div>
<svg style="left:946px;top:74px" width="28" height="8"><path d="M0.5 3.5Q3.5 0 6.5 3.5Q3.5 7 0.5 3.5Z" fill="#fff" stroke="#222" stroke-width="0.5"/><circle cx="3.5" cy="3.5" r="1.2" fill="#222"/><path d="M11 0.5L15 4L13 4.2L14 6.5L13 7L12 4.8L11 6Z" fill="#fff" stroke="#222" stroke-width="0.5"/><rect x="18.5" y="1.5" width="6.5" height="5" fill="#333" stroke="#111" stroke-width="0.5"/><circle cx="21.7" cy="4" r="1.6" fill="#fff"/><rect x="19" y="0.5" width="2" height="1.2" fill="#eee"/></svg>
<svg style="left:810px;top:73px" width="9" height="9"><circle cx="4.5" cy="4.5" r="4" fill="#ddd" stroke="#666" stroke-width="0.5"/><path d="M2.5 5.5L5 3L7 5" stroke="#888" stroke-width="0.8" fill="none"/></svg>
<svg style="left:759.5px;top:83.5px" width="8" height="8"><circle cx="4" cy="4" r="2.2" fill="#111"/><circle cx="4" cy="4" r="1.4" fill="#fafafa"/><circle cx="4" cy="4" r="0.45" fill="#444"/></svg>
<svg style="left:769.5px;top:83px" width="9" height="9"><path d="M1 1.5H8L4.5 8Z" fill="none" stroke="#e08a20" stroke-width="1.4"/></svg>
<div class="t" style="left:780.20px;top:84.92px;font-size:6px;color:#000;transform:scaleX(0.906);transform-origin:0 0;">Cube</div>
<div class="a" style="left:798.7px;top:83.5px;width:1px;height:8px;background:#333;"></div>
<svg style="left:946px;top:84px" width="28" height="8"><path d="M0.5 3.5Q3.5 0 6.5 3.5Q3.5 7 0.5 3.5Z" fill="#fff" stroke="#222" stroke-width="0.5"/><circle cx="3.5" cy="3.5" r="1.2" fill="#222"/><path d="M11 0.5L15 4L13 4.2L14 6.5L13 7L12 4.8L11 6Z" fill="#fff" stroke="#222" stroke-width="0.5"/><rect x="18.5" y="1.5" width="6.5" height="5" fill="#333" stroke="#111" stroke-width="0.5"/><circle cx="21.7" cy="4" r="1.6" fill="#fff"/><rect x="19" y="0.5" width="2" height="1.2" fill="#eee"/></svg>
<svg style="left:805px;top:83px" width="7" height="8"><circle cx="1.5" cy="1.5" r="0.7" fill="#999"/><circle cx="5" cy="1.5" r="0.7" fill="#999"/><circle cx="1.5" cy="5" r="0.7" fill="#999"/><circle cx="5" cy="5" r="0.7" fill="#999"/></svg>
<svg style="left:759.5px;top:93.7px" width="8" height="8"><circle cx="4" cy="4" r="2.2" fill="#111"/><circle cx="4" cy="4" r="1.4" fill="#fafafa"/><circle cx="4" cy="4" r="0.45" fill="#444"/></svg>
<svg style="left:770.5px;top:93px" width="8" height="9"><circle cx="3.5" cy="3" r="2.5" fill="#f0c060" stroke="#553" stroke-width="0.5"/><rect x="2.5" y="5.5" width="2" height="2.5" fill="#e08a20"/></svg>
<div class="t" style="left:780.20px;top:95.12px;font-size:6px;color:#000;transform:scaleX(0.986);transform-origin:0 0;">Lamp</div>
<div class="a" style="left:800.5px;top:93.7px;width:1px;height:8px;background:#333;"></div>
<svg style="left:946px;top:94.2px" width="28" height="8"><path d="M0.5 3.5Q3.5 0 6.5 3.5Q3.5 7 0.5 3.5Z" fill="#fff" stroke="#222" stroke-width="0.5"/><circle cx="3.5" cy="3.5" r="1.2" fill="#222"/><path d="M11 0.5L15 4L13 4.2L14 6.5L13 7L12 4.8L11 6Z" fill="#fff" stroke="#222" stroke-width="0.5"/><rect x="18.5" y="1.5" width="6.5" height="5" fill="#333" stroke="#111" stroke-width="0.5"/><circle cx="21.7" cy="4" r="1.6" fill="#fff"/><rect x="19" y="0.5" width="2" height="1.2" fill="#eee"/></svg>
<svg style="left:759.5px;top:103.7px" width="8" height="8"><circle cx="4" cy="4" r="2.2" fill="#111"/><circle cx="4" cy="4" r="1.4" fill="#fafafa"/><circle cx="4" cy="4" r="0.45" fill="#444"/></svg>
<svg style="left:769.5px;top:103px" width="9" height="9"><path d="M1 1.5H8L4.5 8Z" fill="none" stroke="#e08a20" stroke-width="1.4"/></svg>
<div class="t" style="left:780.20px;top:105.12px;font-size:6px;color:#000;transform:scaleX(0.951);transform-origin:0 0;">lo poly</div>
<div class="a" style="left:802px;top:103.7px;width:1px;height:8px;background:#333;"></div>
<svg style="left:946px;top:104.2px" width="28" height="8"><path d="M0.5 3.5Q3.5 0 6.5 3.5Q3.5 7 0.5 3.5Z" fill="#fff" stroke="#222" stroke-width="0.5"/><circle cx="3.5" cy="3.5" r="1.2" fill="#222"/><path d="M11 0.5L15 4L13 4.2L14 6.5L13 7L12 4.8L11 6Z" fill="#fff" stroke="#222" stroke-width="0.5"/><rect x="18.5" y="1.5" width="6.5" height="5" fill="#333" stroke="#111" stroke-width="0.5"/><circle cx="21.7" cy="4" r="1.6" fill="#fff"/><rect x="19" y="0.5" width="2" height="1.2" fill="#eee"/></svg>
<div class="a" style="left:750px;top:111px;width:232px;height:13px;background:linear-gradient(#737373,#686868);border-top:1px solid #333;border-bottom:1px solid #5a5a5a"></div>
<div class="a" style="left:754px;top:112.5px;width:15px;height:9.5px;background:linear-gradient(#3a3a3a,#262626);border:1px solid #151515;border-radius:2px;"></div>
<svg style="left:756px;top:114px" width="8" height="7"><rect x="0" y="0.5" width="5" height="2" fill="#eee"/><rect x="0" y="3.5" width="5" height="2" fill="#eee"/></svg>
<svg style="left:763.5px;top:113.7px" width="4" height="7"><path d="M0 3 L2 0.3 L4 3Z M0 4 L2 6.7 L4 4Z" fill="#ddd"/></svg>
<div class="a" style="left:772.2px;top:112.5px;width:11.14px;height:9.5px;background:linear-gradient(#5c7cbc,#4565a5);border:1px solid #202020;border-radius:2px 0 0 2px;"></div>
<div class="a" style="left:783.34px;top:112.5px;width:11.14px;height:9.5px;background:linear-gradient(#555,#444);border:1px solid #202020;"></div>
<div class="a" style="left:794.48px;top:112.5px;width:11.14px;height:9.5px;background:linear-gradient(#555,#444);border:1px solid #202020;"></div>
<div class="a" style="left:805.62px;top:112.5px;width:11.14px;height:9.5px;background:linear-gradient(#555,#444);border:1px solid #202020;"></div>
<div class="a" style="left:816.76px;top:112.5px;width:11.14px;height:9.5px;background:linear-gradient(#555,#444);border:1px solid #202020;"></div>
<div class="a" style="left:827.9000000000001px;top:112.5px;width:11.14px;height:9.5px;background:linear-gradient(#555,#444);border:1px solid #202020;"></div>
<div class="a" style="left:839.0400000000001px;top:112.5px;width:11.14px;height:9.5px;background:linear-gradient(#555,#444);border:1px solid #202020;"></div>
<div class="a" style="left:850.1800000000001px;top:112.5px;width:11.14px;height:9.5px;background:linear-gradient(#555,#444);border:1px solid #202020;"></div>
<div class="a" style="left:861.32px;top:112.5px;width:11.14px;height:9.5px;background:linear-gradient(#555,#444);border:1px solid #202020;"></div>
<div class="a" style="left:872.46px;top:112.5px;width:11.14px;height:9.5px;background:linear-gradient(#555,#444);border:1px solid #202020;"></div>
<div class="a" style="left:883.6px;top:112.5px;width:11.14px;height:9.5px;background:linear-gradient(#555,#444);border:1px solid #202020;border-radius:0 2px 2px 0;"></div>
<svg style="left:773.8000000000001px;top:113.3px" width="8" height="8"><rect x="1" y="2" width="6" height="4" fill="#eee"/><rect x="2" y="1" width="2" height="1" fill="#eee"/><circle cx="4" cy="4" r="1" fill="#333"/></svg>
<svg style="left:784.94px;top:113.3px" width="8" height="8"><circle cx="2" cy="2" r="1.2" fill="#fff"/><circle cx="2" cy="5.5" r="1.2" fill="#ddd"/><path d="M4 6.5L6.5 1" stroke="#6a8cd0" stroke-width="1.4"/></svg>
<svg style="left:796.08px;top:113.3px" width="8" height="8"><circle cx="4" cy="4" r="3.2" fill="#888" stroke="#bbb" stroke-width="0.5"/></svg>
<svg style="left:807.22px;top:113.3px" width="8" height="8"><path d="M4 0.5L7.5 2.2V6L4 7.7L0.5 6V2.2Z" fill="#c8b070" stroke="#555" stroke-width="0.4"/></svg>
<svg style="left:818.36px;top:113.3px" width="8" height="8"><path d="M0.5 6L3 3.5M3 6.5L6 3.5M5 1.5L7.5 4" stroke="#ccc" stroke-width="1"/></svg>
<svg style="left:829.5000000000001px;top:113.3px" width="8" height="8"><path d="M0.5 7.5L5 3M5 1A1.8 1.8 0 1 0 7 3" stroke="#ccc" stroke-width="1" fill="none"/></svg>
<svg style="left:840.6400000000001px;top:113.3px" width="8" height="8"><path d="M1 1L4 7L7 1M4 7V1" stroke="#bbb" stroke-width="0.8" fill="none"/></svg>
<svg style="left:851.7800000000001px;top:113.3px" width="8" height="8"><circle cx="4" cy="4" r="3.2" fill="#777" stroke="#ccc" stroke-width="0.6"/><circle cx="4" cy="4" r="1.4" fill="#aaa"/></svg>
<svg style="left:862.9200000000001px;top:113.3px" width="8" height="8"><rect x="0.5" y="0.5" width="7" height="7" fill="#eee"/><rect x="0.5" y="0.5" width="2.3" height="2.3" fill="#c33"/><rect x="5.2" y="0.5" width="2.3" height="2.3" fill="#c33"/><rect x="2.8" y="2.8" width="2.4" height="2.4" fill="#c33"/><rect x="0.5" y="5.2" width="2.3" height="2.3" fill="#c33"/><rect x="5.2" y="5.2" width="2.3" height="2.3" fill="#c33"/></svg>
<svg style="left:874.0600000000001px;top:113.3px" width="8" height="8"><circle cx="1.5" cy="1.5" r="0.8" fill="#ddd"/><circle cx="6" cy="1.5" r="0.8" fill="#ddd"/><circle cx="1.5" cy="6" r="0.8" fill="#ddd"/><circle cx="6" cy="6" r="0.8" fill="#ddd"/><circle cx="4" cy="4" r="0.8" fill="#ddd"/></svg>
<svg style="left:885.2px;top:113.3px" width="8" height="8"><path d="M1 7L6 1" stroke="#ccc" stroke-width="1.2"/><circle cx="6" cy="2" r="1.3" fill="#ccc"/></svg>
<svg style="left:976px;top:111px" width="6" height="6"><path d="M1 0L6 5M3.5 0L6 2.5" stroke="#555" stroke-width="0.8"/></svg>
<svg style="left:754px;top:129px" width="8" height="8"><path d="M1 7L3.5 4.5" stroke="#eee" stroke-width="0.9"/><path d="M3 2.5L5.5 0.5L7.5 2.5L5.5 5Z" fill="#eee" stroke="#222" stroke-width="0.5"/></svg>
<svg style="left:765px;top:128.5px" width="9" height="9"><circle cx="2.5" cy="2.5" r="1.6" fill="#fff"/><circle cx="2.5" cy="6.3" r="1.6" fill="#ddd"/><path d="M5 7.5L8 1.5" stroke="#5a7cd0" stroke-width="1.8"/></svg>
<div class="t" style="left:774.00px;top:130.42px;font-size:6px;color:#000;transform:scaleX(0.923);transform-origin:0 0;">Scene</div>
<div class="a" style="left:752px;top:142.8px;width:220px;height:1px;background:#5c5c5c;"></div>
<div class="a" style="left:752px;top:143.8px;width:220px;height:1px;background:#828282;"></div>
<svg style="left:754px;top:146.5px" width="6" height="5"><path d="M0 0V4.6L5.2 2.3Z" fill="#111"/></svg>
<div class="t" style="left:762.00px;top:145.88px;font-size:6.4px;color:#000;">Render</div>
<div class="a" style="left:752px;top:155.1px;width:220px;height:1px;background:#5c5c5c;"></div>
<div class="a" style="left:752px;top:156.1px;width:220px;height:1px;background:#828282;"></div>
<svg style="left:754px;top:158.79999999999998px" width="6" height="5"><path d="M0 0V4.6L5.2 2.3Z" fill="#111"/></svg>
<div class="t" style="left:762.00px;top:158.18px;font-size:6.4px;color:#000;">Layers</div>
<div class="a" style="left:752px;top:167.1px;width:220px;height:1px;background:#5c5c5c;"></div>
<div class="a" style="left:752px;top:168.1px;width:220px;height:1px;background:#828282;"></div>
<svg style="left:754px;top:170.79999999999998px" width="6" height="5"><path d="M0 0V4.6L5.2 2.3Z" fill="#111"/></svg>
<div class="t" style="left:762.00px;top:170.18px;font-size:6.4px;color:#000;">Dimensions</div>
<div class="a" style="left:752px;top:179.5px;width:220px;height:1px;background:#5c5c5c;"></div>
<div class="a" style="left:752px;top:180.5px;width:220px;height:1px;background:#828282;"></div>
<svg style="left:754px;top:183.2px" width="6" height="5"><path d="M0 0V4.6L5.2 2.3Z" fill="#111"/></svg>
<div class="a" style="left:762px;top:181.8px;width:7.5px;height:7.5px;background:linear-gradient(#4a4a4a,#3a3a3a);border:1px solid #222;border-radius:1.5px"></div>
<svg style="left:762.5px;top:181px" width="7" height="7"><path d="M1 3.5L3 5.5L6.5 0.5" stroke="#fff" stroke-width="1.2" fill="none"/></svg>
<div class="t" style="left:772.00px;top:182.58px;font-size:6.4px;color:#000;">Anti-Aliasing</div>
<div class="a" style="left:752px;top:191.8px;width:220px;height:1px;background:#5c5c5c;"></div>
<div class="a" style="left:752px;top:192.8px;width:220px;height:1px;background:#828282;"></div>
<svg style="left:754px;top:195.5px" width="6" height="5"><path d="M0 0V4.6L5.2 2.3Z" fill="#111"/></svg>
<div class="a" style="left:762px;top:194.10000000000002px;width:7.5px;height:7.5px;background:linear-gradient(#4a4a4a,#3a3a3a);border:1px solid #222;border-radius:1.5px"></div>
<div class="t" style="left:772.00px;top:194.88px;font-size:6.4px;color:#000;">Sampled Motion Blur</div>
<div class="a" style="left:752px;top:204.0px;width:220px;height:1px;background:#5c5c5c;"></div>
<div class="a" style="left:752px;top:205.0px;width:220px;height:1px;background:#828282;"></div>
<svg style="left:754px;top:207.7px" width="6" height="5"><path d="M0 0V4.6L5.2 2.3Z" fill="#111"/></svg>
<div class="t" style="left:762.00px;top:207.08px;font-size:6.4px;color:#000;">Shading</div>
<div class="a" style="left:752px;top:216.1px;width:220px;height:1px;background:#5c5c5c;"></div>
<div class="a" style="left:752px;top:217.1px;width:220px;height:1px;background:#828282;"></div>
<svg style="left:754px;top:219.79999999999998px" width="6" height="5"><path d="M0 0V4.6L5.2 2.3Z" fill="#111"/></svg>
<div class="t" style="left:762.00px;top:219.18px;font-size:6.4px;color:#000;">Performance</div>
<div class="a" style="left:752px;top:228.5px;width:220px;height:1px;background:#5c5c5c;"></div>
<div class="a" style="left:752px;top:229.5px;width:220px;height:1px;background:#828282;"></div>
<svg style="left:754px;top:232.2px" width="6" height="5"><path d="M0 0V4.6L5.2 2.3Z" fill="#111"/></svg>
<div class="t" style="left:762.00px;top:231.58px;font-size:6.4px;color:#000;">Post Processing</div>
<div class="a" style="left:752px;top:240.7px;width:220px;height:1px;background:#5c5c5c;"></div>
<div class="a" style="left:752px;top:241.7px;width:220px;height:1px;background:#828282;"></div>
<svg style="left:754px;top:244.39999999999998px" width="6" height="5"><path d="M0 0V4.6L5.2 2.3Z" fill="#111"/></svg>
<div class="a" style="left:762px;top:243.0px;width:7.5px;height:7.5px;background:linear-gradient(#4a4a4a,#3a3a3a);border:1px solid #222;border-radius:1.5px"></div>
<div class="t" style="left:772.00px;top:243.78px;font-size:6.4px;color:#000;">Stamp</div>
<div class="a" style="left:752px;top:252.8px;width:220px;height:1px;background:#5c5c5c;"></div>
<div class="a" style="left:752px;top:253.8px;width:220px;height:1px;background:#828282;"></div>
<svg style="left:754px;top:256.7px" width="6" height="5"><path d="M0 0H5L2.5 4.4Z" fill="#111"/></svg>
<div class="t" style="left:762.00px;top:255.88px;font-size:6.4px;color:#000;">Output</div>
<div class="a" style="left:753.7px;top:269.2px;width:206px;height:8.8px;background:linear-gradient(#a8a8a8,#a8a8a8);border:1px solid #2a2a2a;border-radius:2px;"></div>
<div class="t" style="left:756.00px;top:271.22px;font-size:6px;color:#000;transform:scaleX(0.824);transform-origin:0 0;">/tmp\</div>
<div class="a" style="left:959.5px;top:269px;width:11px;height:9px;background:linear-gradient(#9c9c9c,#828282);border:1px solid #333;border-radius:1px"></div>
<svg style="left:961px;top:270px" width="8" height="7"><rect x="0.5" y="2" width="7" height="4.5" fill="#f0f0a0" stroke="#444" stroke-width="0.5"/><rect x="0.5" y="1" width="3" height="1.2" fill="#f0f0a0" stroke="#444" stroke-width="0.5"/></svg>
<div class="a" style="left:753.7px;top:280.8px;width:106px;height:9.8px;background:linear-gradient(#4a4a4a,#363636);border:1px solid #1e1e1e;border-radius:2px;"></div>
<svg style="left:852.7px;top:282.2px" width="4" height="7"><path d="M0 3 L2 0.3 L4 3Z M0 4 L2 6.7 L4 4Z" fill="#ddd"/></svg>
<div class="t" style="left:764.00px;top:283.22px;font-size:6px;color:#fff;">Targa Raw</div>
<svg style="left:755.5px;top:282px" width="7" height="7"><rect x="0.5" y="0.5" width="6" height="6" fill="#eee" stroke="#333" stroke-width="0.5"/><path d="M1 5L3 2.5L5 4.5L6 3.5" stroke="#666" stroke-width="0.6" fill="none"/></svg>
<div class="a" style="left:753.7px;top:292.5px;width:106px;height:9.3px;background:linear-gradient(#4a4a4a,#383838);border:1px solid #1e1e1e;border-radius:2px"></div>
<div class="a" style="left:788px;top:292.5px;width:35.5px;height:9.3px;background:linear-gradient(#6a92d8,#5080c8);border:1px solid #1e1e1e"></div>
<div class="t" style="left:767.00px;top:294.92px;font-size:6px;color:#fff;transform:scaleX(0.827);transform-origin:0 0;">BW</div>
<div class="t" style="left:800.00px;top:294.92px;font-size:6px;color:#000;transform:scaleX(0.845);transform-origin:0 0;">RGB</div>
<div class="t" style="left:834.00px;top:294.92px;font-size:6px;color:#fff;transform:scaleX(0.882);transform-origin:0 0;">RGBA</div>
<div class="a" style="left:865px;top:282.2px;width:7.5px;height:7.5px;background:linear-gradient(#4a4a4a,#363636);border:1px solid #222;border-radius:1.5px"></div>
<svg style="left:865.5px;top:281.4px" width="8" height="8"><path d="M1 4L3.2 6.2L7 1" stroke="#fff" stroke-width="1.3" fill="none"/></svg>
<div class="t" style="left:875.00px;top:283.82px;font-size:6px;color:#fff;transform:scaleX(0.897);transform-origin:0 0;">File Extensions</div>
<div class="a" style="left:865px;top:293.7px;width:7.5px;height:7.5px;background:linear-gradient(#4a4a4a,#363636);border:1px solid #222;border-radius:1.5px"></div>
<svg style="left:865.5px;top:292.9px" width="8" height="8"><path d="M1 4L3.2 6.2L7 1" stroke="#fff" stroke-width="1.3" fill="none"/></svg>
<div class="t" style="left:875.00px;top:295.32px;font-size:6px;color:#fff;">Overwrite</div>
<div class="a" style="left:865px;top:305px;width:7.5px;height:7.5px;background:linear-gradient(#4a4a4a,#363636);border:1px solid #222;border-radius:1.5px"></div>
<div class="t" style="left:875.00px;top:306.62px;font-size:6px;color:#000;transform:scaleX(0.923);transform-origin:0 0;">Placeholders</div>
<div class="a" style="left:752px;top:318.5px;width:220px;height:1px;background:#5c5c5c;"></div>
<div class="a" style="left:752px;top:319.5px;width:220px;height:1px;background:#828282;"></div>
<svg style="left:754px;top:322.4px" width="6" height="5"><path d="M0 0H5L2.5 4.4Z" fill="#111"/></svg>
<div class="t" style="left:762.00px;top:321.58px;font-size:6.4px;color:#000;">Bake</div>
<div class="a" style="left:753.7px;top:334.7px;width:217px;height:8.8px;background:linear-gradient(#b4b4b4,#9c9c9c);border:1px solid #2a2a2a;border-radius:2px"></div>
<svg style="left:755px;top:335.5px" width="8" height="7"><rect x="0.5" y="1" width="6" height="5" fill="#eee" stroke="#333" stroke-width="0.5"/><circle cx="6" cy="1.5" r="1.3" fill="#ee4"/></svg>
<div class="t" style="left:859.50px;top:336.52px;font-size:6px;color:#000;transform:scaleX(0.950);transform-origin:0 0;">Bake</div>
<div class="t" style="left:756.00px;top:349.22px;font-size:6px;color:#000;transform:scaleX(0.905);transform-origin:0 0;">Bake Mode:</div>
<div class="a" style="left:827.6px;top:347.3px;width:143px;height:9.3px;background:linear-gradient(#4a4a4a,#363636);border:1px solid #1e1e1e;border-radius:2px;"></div>
<svg style="left:963.6px;top:348.45px" width="4" height="7"><path d="M0 3 L2 0.3 L4 3Z M0 4 L2 6.7 L4 4Z" fill="#ddd"/></svg>
<div class="t" style="left:830.00px;top:349.22px;font-size:6px;color:#fff;">Normals</div>
<div class="a" style="left:755px;top:361.3px;width:7.5px;height:7.5px;background:linear-gradient(#4a4a4a,#363636);border:1px solid #222;border-radius:1.5px"></div>
<div class="t" style="left:765.00px;top:362.12px;font-size:6px;color:#000;transform:scaleX(0.990);transform-origin:0 0;">Bake from Multires</div>
<div class="t" style="left:756.00px;top:374.72px;font-size:6px;color:#000;transform:scaleX(0.932);transform-origin:0 0;">Normal Space:</div>
<div class="a" style="left:827.6px;top:372.6px;width:143px;height:9.3px;background:linear-gradient(#4a4a4a,#363636);border:1px solid #1e1e1e;border-radius:2px;"></div>
<svg style="left:963.6px;top:373.75px" width="4" height="7"><path d="M0 3 L2 0.3 L4 3Z M0 4 L2 6.7 L4 4Z" fill="#ddd"/></svg>
<div class="t" style="left:830.00px;top:374.52px;font-size:6px;color:#fff;">Tangent</div>
<div class="a" style="left:755px;top:391.5px;width:7.5px;height:7.5px;background:linear-gradient(#4a4a4a,#363636);border:1px solid #222;border-radius:1.5px"></div>
<svg style="left:755.5px;top:390.7px" width="8" height="8"><path d="M1 4L3.2 6.2L7 1" stroke="#fff" stroke-width="1.3" fill="none"/></svg>
<div class="t" style="left:765.00px;top:393.12px;font-size:6px;color:#fff;transform:scaleX(0.941);transform-origin:0 0;">Clear</div>
<div class="a" style="left:865.5px;top:391.5px;width:7.5px;height:7.5px;background:linear-gradient(#4a4a4a,#363636);border:1px solid #222;border-radius:1.5px"></div>
<svg style="left:866.0px;top:390.7px" width="8" height="8"><path d="M1 4L3.2 6.2L7 1" stroke="#fff" stroke-width="1.3" fill="none"/></svg>
<div class="t" style="left:875.50px;top:393.12px;font-size:6px;color:#fff;">Selected to Active</div>
<div class="a" style="left:753.2px;top:401.8px;width:106px;height:9.2px;background:#b9b9b9;border:1px solid #262626;border-radius:4.5px;overflow:hidden"></div>
<div class="a" style="left:754.2px;top:402.8px;width:104px;height:7.199999999999999px;background:linear-gradient(#cdcdcd,#aeaeae);border-radius:3.5px;"></div>
<svg style="left:757.2px;top:404.6px" width="3" height="4"><path d="M2.5 0.2 L0.3 2 L2.5 3.8Z" fill="#8a8a8a"/></svg>
<svg style="left:852.7px;top:404.6px" width="3" height="4"><path d="M0.3 0.2 L2.5 2 L0.3 3.8Z" fill="#8a8a8a"/></svg>
<div class="t" style="left:793.69px;top:403.32px;font-size:6px;color:#000;">Margin: 2</div>
<div class="a" style="left:863.8px;top:401.8px;width:107px;height:9.2px;background:#b9b9b9;border:1px solid #262626;border-radius:4.5px;overflow:hidden"></div>
<div class="a" style="left:864.8px;top:402.8px;width:105px;height:7.199999999999999px;background:linear-gradient(#cdcdcd,#aeaeae);border-radius:3.5px;"></div>
<svg style="left:867.8px;top:404.6px" width="3" height="4"><path d="M2.5 0.2 L0.3 2 L2.5 3.8Z" fill="#8a8a8a"/></svg>
<svg style="left:964.3px;top:404.6px" width="3" height="4"><path d="M0.3 0.2 L2.5 2 L0.3 3.8Z" fill="#8a8a8a"/></svg>
<div class="t" style="left:896.45px;top:403.32px;font-size:6px;color:#000;">Distance: 0.000</div>
<div class="a" style="left:863.8px;top:413.4px;width:107px;height:9px;background:#b9b9b9;border:1px solid #262626;border-radius:4.5px;overflow:hidden"></div>
<div class="a" style="left:864.8px;top:414.4px;width:105px;height:7px;background:linear-gradient(#cdcdcd,#aeaeae);border-radius:3.5px;"></div>
<svg style="left:867.8px;top:416.09999999999997px" width="3" height="4"><path d="M2.5 0.2 L0.3 2 L2.5 3.8Z" fill="#8a8a8a"/></svg>
<svg style="left:964.3px;top:416.09999999999997px" width="3" height="4"><path d="M0.3 0.2 L2.5 2 L0.3 3.8Z" fill="#8a8a8a"/></svg>
<div class="t" style="left:902.28px;top:414.72px;font-size:6px;color:#000;">Bias: 0.080</div>
<div class="t" style="left:756.00px;top:415.42px;font-size:6px;color:#000;transform:scaleX(0.899);transform-origin:0 0;">Split:</div>
<div class="a" style="left:791px;top:413.4px;width:68.5px;height:9px;background:linear-gradient(#4a4a4a,#363636);border:1px solid #1e1e1e;border-radius:2px;"></div>
<svg style="left:852.5px;top:414.4px" width="4" height="7"><path d="M0 3 L2 0.3 L4 3Z M0 4 L2 6.7 L4 4Z" fill="#ddd"/></svg>
<div class="t" style="left:793.50px;top:415.02px;font-size:6px;color:#fff;">Automatic</div>
<div class="a" style="left:14px;top:482px;width:734px;height:15px;background:linear-gradient(#707070,#686868);border-top:1px solid #262626;border-bottom:1px solid #333"></div>
<div class="a" style="left:303.5px;top:483px;width:1px;height:13px;background:#2e2e2e;"></div>
<div class="a" style="left:19px;top:485.2px;width:15px;height:9.8px;background:linear-gradient(#3a3a3a,#262626);border:1px solid #151515;border-radius:2px;"></div>
<svg style="left:21px;top:486.5px" width="8" height="7"><rect x="0" y="0.5" width="7" height="2.5" fill="#eee"/><rect x="0" y="3.5" width="7" height="0.8" fill="#4a4ac0"/><rect x="0" y="4.5" width="7" height="2" fill="#eee"/></svg>
<svg style="left:28.5px;top:486.5px" width="4" height="7"><path d="M0 3 L2 0.3 L4 3Z M0 4 L2 6.7 L4 4Z" fill="#ddd"/></svg>
<svg style="left:36.5px;top:486.4px" width="8" height="8"><circle cx="4" cy="4" r="2.6" fill="#3a3a3a" opacity="0.5"/><circle cx="4" cy="4" r="1.8" fill="#5a5a5a" stroke="#e0e0e0" stroke-width="0.9"/></svg>
<div class="t" style="left:49.60px;top:487.72px;font-size:6px;color:#000;transform:scaleX(0.969);transform-origin:0 0;">View</div>
<div class="t" style="left:68.80px;top:487.72px;font-size:6px;color:#000;transform:scaleX(0.973);transform-origin:0 0;">Image*</div>
<div class="a" style="left:95.2px;top:485.5px;width:16px;height:9.8px;background:linear-gradient(#3a3a3a,#262626);border:1px solid #151515;border-radius:2px;"></div>
<svg style="left:97px;top:487px" width="8" height="7"><rect x="0.5" y="0.5" width="7" height="6" fill="#f0e8f0" stroke="#555" stroke-width="0.4"/><path d="M1 5L3.5 2L6 5" stroke="#b03040" stroke-width="0.9" fill="none"/></svg>
<div class="a" style="left:110.8px;top:485.8px;width:60.5px;height:9.6px;background:linear-gradient(#a8a8a8,#a8a8a8);border:1px solid #2a2a2a;border-radius:1px;"></div>
<div class="t" style="left:113.00px;top:487.92px;font-size:6px;color:#000;transform:scaleX(0.944);transform-origin:0 0;">rivets_normal</div>
<div class="a" style="left:171px;top:485.8px;width:10px;height:9.6px;background:linear-gradient(#8c8c8c,#8c8c8c);border:1px solid #2a2a2a;border-radius:1px;"></div>
<div class="t" style="left:174.25px;top:487.92px;font-size:6px;color:#222;transform:scaleX(0.953);transform-origin:0 0;">F</div>
<div class="a" style="left:181.5px;top:485.8px;width:21px;height:9.6px;background:linear-gradient(#9a9a9a,#9a9a9a);border:1px solid #2a2a2a;border-radius:1px;"></div>
<svg style="left:181.5px;top:485.5px" width="10" height="10"><path d="M5 1.5V8.5M1.5 5H8.5" stroke="#111" stroke-width="3.4"/><path d="M5 2V8M2 5H8" stroke="#fff" stroke-width="1.5"/></svg>
<svg style="left:192.5px;top:485.5px" width="10" height="10"><path d="M2 2L8 8M8 2L2 8" stroke="#111" stroke-width="3"/><path d="M2.5 2.5L7.5 7.5M7.5 2.5L2.5 7.5" stroke="#fff" stroke-width="1.4"/></svg>
<div class="a" style="left:205.5px;top:485.8px;width:10px;height:9.6px;background:linear-gradient(#8c8c8c,#8c8c8c);border:1px solid #2a2a2a;border-radius:1px;"></div>
<svg style="left:207.5px;top:487px" width="7" height="7"><path d="M1 6.5L3.5 4" stroke="#fff" stroke-width="0.9"/><path d="M3 2.5L5 0.5L6.8 2.3L4.6 4.6Z" fill="#fff" stroke="#222" stroke-width="0.4"/></svg>
<div class="a" style="left:219.5px;top:485.8px;width:42.5px;height:9.6px;background:#4a4a4a;border:1px solid #222;border-radius:1px"></div>
<div class="a" style="left:231.5px;top:485.8px;width:11px;height:9.6px;background:#5a78b8;border:1px solid #222"></div>
<svg style="left:221px;top:487px" width="40" height="8"><path d="M0.5 6.5L6 1M2.5 7L8 1.5" stroke="#e04040" stroke-width="1"/><path d="M0.5 3.5L4 0.5" stroke="#eee" stroke-width="0.8"/><circle cx="15.5" cy="4" r="3" fill="#fff"/><circle cx="15.5" cy="4" r="1.4" fill="#e03030"/><circle cx="14" cy="2.5" r="0.9" fill="#e03030"/><circle cx="17" cy="5.5" r="0.9" fill="#e03030"/><path d="M24 7L29 1.5" stroke="#e0c040" stroke-width="1.2"/><path d="M25 6L30 1" stroke="#c03030" stroke-width="0.6"/><path d="M34 7H40V1Z" fill="#111"/><path d="M34 7V1H40Z" fill="#eee"/></svg>
<div class="a" style="left:308.2px;top:485.2px;width:15px;height:9.8px;background:linear-gradient(#3a3a3a,#262626);border:1px solid #151515;border-radius:2px;"></div>
<svg style="left:310px;top:486.5px" width="8" height="8"><path d="M4 0.5L7.5 2.2V6L4 7.6L0.5 6V2.2Z" fill="#eee" stroke="#333" stroke-width="0.4"/><path d="M0.5 2.2L4 4L7.5 2.2M4 4V7.6" stroke="#666" stroke-width="0.5" fill="none"/></svg>
<svg style="left:318px;top:486.5px" width="4" height="7"><path d="M0 3 L2 0.3 L4 3Z M0 4 L2 6.7 L4 4Z" fill="#ddd"/></svg>
<svg style="left:326px;top:486.2px" width="8" height="8"><circle cx="4" cy="4" r="2.6" fill="#3a3a3a" opacity="0.5"/><circle cx="4" cy="4" r="1.8" fill="#5a5a5a" stroke="#e0e0e0" stroke-width="0.9"/></svg>
<div class="t" style="left:340.00px;top:487.72px;font-size:6px;color:#000;transform:scaleX(0.969);transform-origin:0 0;">View</div>
<div class="t" style="left:361.00px;top:487.72px;font-size:6px;color:#000;transform:scaleX(1.019);transform-origin:0 0;">Select</div>
<div class="t" style="left:385.00px;top:487.72px;font-size:6px;color:#000;">Object</div>
<div class="a" style="left:406.6px;top:485.2px;width:63.6px;height:9.6px;background:linear-gradient(#4a4a4a,#363636);border:1px solid #1e1e1e;border-radius:2px;"></div>
<svg style="left:463.20000000000005px;top:486.5px" width="4" height="7"><path d="M0 3 L2 0.3 L4 3Z M0 4 L2 6.7 L4 4Z" fill="#ddd"/></svg>
<div class="t" style="left:417.50px;top:487.42px;font-size:6px;color:#fff;">Object Mode</div>
<svg style="left:408.5px;top:486.2px" width="8" height="8"><path d="M4 0.5L7.5 2.2V6L4 7.6L0.5 6V2.2Z" fill="#f0a030" stroke="#553" stroke-width="0.4"/><path d="M0.5 2.2L4 4L7.5 2.2M4 4V7.6" stroke="#ffe0a0" stroke-width="0.5" fill="none"/></svg>
<div class="a" style="left:474.4px;top:485.2px;width:18px;height:9.6px;background:linear-gradient(#4a4a4a,#363636);border:1px solid #1e1e1e;border-radius:2px;"></div>
<svg style="left:485.4px;top:486.5px" width="4" height="7"><path d="M0 3 L2 0.3 L4 3Z M0 4 L2 6.7 L4 4Z" fill="#ddd"/></svg>
<svg style="left:476.5px;top:486.6px" width="7" height="7"><circle cx="3.5" cy="3.5" r="3" fill="#f4f4f4"/></svg>
<div class="a" style="left:496.6px;top:485.2px;width:18px;height:9.6px;background:linear-gradient(#4a4a4a,#363636);border:1px solid #1e1e1e;border-radius:2px;"></div>
<svg style="left:507.6px;top:486.5px" width="4" height="7"><path d="M0 3 L2 0.3 L4 3Z M0 4 L2 6.7 L4 4Z" fill="#ddd"/></svg>
<svg style="left:498.5px;top:486.6px" width="8" height="8"><circle cx="2.5" cy="2.5" r="2" fill="#eee"/><circle cx="5" cy="5.2" r="2.2" fill="#eee"/><path d="M1.5 4L5 1.5" stroke="#4050c0" stroke-width="1.4"/></svg>
<div class="a" style="left:514px;top:485.2px;width:10px;height:9.6px;background:#8a8a8a;border:1px solid #333"></div>
<svg style="left:515.5px;top:486.7px" width="7" height="7"><path d="M0 1.5H7M0 3.5H7M0 5.5H7M1.5 0V7M3.5 0V7M5.5 0V7" stroke="#ddd" stroke-width="0.6"/></svg>
<div class="a" style="left:528.5px;top:485.2px;width:9.5px;height:9.6px;background:#8a8a8a;border:1px solid #333"></div>
<svg style="left:530px;top:486.5px" width="7" height="8"><path d="M3.5 4V0.5" stroke="#4050d0" stroke-width="1.2"/><path d="M3.5 4L0.5 6.5" stroke="#d03030" stroke-width="1.2"/><path d="M3.5 4L6.5 6.5" stroke="#30b030" stroke-width="1.2"/></svg>
<div class="a" style="left:538px;top:485.2px;width:36px;height:9.6px;background:linear-gradient(#4a4a4a,#363636);border:1px solid #1e1e1e;border-radius:2px;"></div>
<svg style="left:567px;top:486.5px" width="4" height="7"><path d="M0 3 L2 0.3 L4 3Z M0 4 L2 6.7 L4 4Z" fill="#ddd"/></svg>
<div class="t" style="left:540.50px;top:487.42px;font-size:6px;color:#fff;">Global</div>
<div class="a" style="left:578.2px;top:485.2px;width:25.5px;height:9.6px;background:#555;border:1px solid #222"></div>
<svg style="left:579.2px;top:486.2px" width="24" height="8"><rect x="0.3" y="0.3" width="4.2" height="3.3" fill="#a0a0a0" stroke="#444" stroke-width="0.3"/><rect x="0.3" y="4.1" width="4.2" height="3.3" fill="#a0a0a0" stroke="#444" stroke-width="0.3"/><rect x="5.1" y="0.3" width="4.2" height="3.3" fill="#a0a0a0" stroke="#444" stroke-width="0.3"/><rect x="5.1" y="4.1" width="4.2" height="3.3" fill="#a0a0a0" stroke="#444" stroke-width="0.3"/><rect x="9.9" y="0.3" width="4.2" height="3.3" fill="#a0a0a0" stroke="#444" stroke-width="0.3"/><rect x="9.9" y="4.1" width="4.2" height="3.3" fill="#a0a0a0" stroke="#444" stroke-width="0.3"/><rect x="14.7" y="0.3" width="4.2" height="3.3" fill="#a0a0a0" stroke="#444" stroke-width="0.3"/><rect x="14.7" y="4.1" width="4.2" height="3.3" fill="#a0a0a0" stroke="#444" stroke-width="0.3"/><rect x="19.5" y="0.3" width="4.2" height="3.3" fill="#a0a0a0" stroke="#444" stroke-width="0.3"/><rect x="19.5" y="4.1" width="4.2" height="3.3" fill="#a0a0a0" stroke="#444" stroke-width="0.3"/></svg>
<svg style="left:580px;top:486.5px" width="3" height="3"><circle cx="1.5" cy="1.5" r="1" fill="#ffa"/></svg>
<div class="a" style="left:607.6px;top:485.2px;width:25.5px;height:9.6px;background:#555;border:1px solid #222"></div>
<svg style="left:608.6px;top:486.2px" width="24" height="8"><rect x="0.3" y="0.3" width="4.2" height="3.3" fill="#a0a0a0" stroke="#444" stroke-width="0.3"/><rect x="0.3" y="4.1" width="4.2" height="3.3" fill="#a0a0a0" stroke="#444" stroke-width="0.3"/><rect x="5.1" y="0.3" width="4.2" height="3.3" fill="#a0a0a0" stroke="#444" stroke-width="0.3"/><rect x="5.1" y="4.1" width="4.2" height="3.3" fill="#a0a0a0" stroke="#444" stroke-width="0.3"/><rect x="9.9" y="0.3" width="4.2" height="3.3" fill="#a0a0a0" stroke="#444" stroke-width="0.3"/><rect x="9.9" y="4.1" width="4.2" height="3.3" fill="#a0a0a0" stroke="#444" stroke-width="0.3"/><rect x="14.7" y="0.3" width="4.2" height="3.3" fill="#a0a0a0" stroke="#444" stroke-width="0.3"/><rect x="14.7" y="4.1" width="4.2" height="3.3" fill="#a0a0a0" stroke="#444" stroke-width="0.3"/><rect x="19.5" y="0.3" width="4.2" height="3.3" fill="#a0a0a0" stroke="#444" stroke-width="0.3"/><rect x="19.5" y="4.1" width="4.2" height="3.3" fill="#a0a0a0" stroke="#444" stroke-width="0.3"/></svg>
<div class="a" style="left:638px;top:485.5px;width:10.5px;height:9.2px;background:#8c8c8c;border:1px solid #333;border-radius:1px"></div>
<div class="a" style="left:650.5px;top:485.5px;width:10.5px;height:9.2px;background:#8c8c8c;border:1px solid #333;border-radius:1px"></div>
<svg style="left:640px;top:487px" width="7" height="7"><rect x="0.5" y="0.5" width="4.5" height="5" fill="#eee" stroke="#333" stroke-width="0.4"/><path d="M3 6.5L6.5 3" stroke="#333" stroke-width="0.8"/></svg>
<svg style="left:652.5px;top:487px" width="7" height="7"><rect x="0.5" y="0.5" width="6" height="6" fill="#aaa" stroke="#666" stroke-width="0.6"/></svg>
<div class="a" style="left:663px;top:485.5px;width:10px;height:9.2px;background:#8c8c8c;border:1px solid #333;border-radius:1px"></div>
<svg style="left:664.5px;top:487px" width="7" height="7"><circle cx="3.5" cy="3.5" r="3" fill="#999" stroke="#ddd" stroke-width="0.5"/><path d="M1 5L5 1M2 6L6 2" stroke="#eee" stroke-width="0.5"/></svg>
<div class="a" style="left:672.5px;top:485.2px;width:19.5px;height:9.6px;background:linear-gradient(#4a4a4a,#363636);border:1px solid #1e1e1e;border-radius:2px;"></div>
<svg style="left:685.0px;top:486.5px" width="4" height="7"><path d="M0 3 L2 0.3 L4 3Z M0 4 L2 6.7 L4 4Z" fill="#ddd"/></svg>
<svg style="left:674px;top:486.5px" width="8" height="8"><circle cx="2.5" cy="2.5" r="1.8" fill="#eee"/><rect x="0.5" y="5" width="6" height="1" fill="#ddd"/></svg>
<div class="a" style="left:694px;top:485.5px;width:11px;height:9.2px;background:#8c8c8c;border:1px solid #333;border-radius:1px"></div>
<svg style="left:695.5px;top:486.7px" width="8" height="7"><rect x="0.5" y="1.5" width="6" height="4.5" fill="#222"/><rect x="2" y="0" width="5.5" height="3" fill="#ee4"/><circle cx="3" cy="4" r="1.3" fill="#fff"/></svg>
<div class="a" style="left:705px;top:485.5px;width:10px;height:9.2px;background:#8c8c8c;border:1px solid #333;border-radius:1px"></div>
<svg style="left:706.5px;top:486.7px" width="7" height="7"><rect x="0.5" y="1" width="6" height="5" fill="#333"/><circle cx="3" cy="3.5" r="1.5" fill="#eee"/></svg>
<div class="a" style="left:14px;top:497px;width:734px;height:4px;background:#6e6e6e;"></div>
<div class="a" style="left:14px;top:500.5px;width:734px;height:1px;background:#9a9a9a;"></div>
<div class="a" style="left:14px;top:501.5px;width:734px;height:7px;background:#8a8a8a;"></div>
<div class="a" style="left:14px;top:508.5px;width:734px;height:1px;background:#626262;"></div>
<div class="a" style="left:140px;top:497.5px;width:2px;height:3.5px;background:#70c040;"></div>
<div class="t" style="left:26.82px;top:502.07px;font-size:6.3px;color:#000;">-50</div>
<div class="t" style="left:48.16px;top:502.07px;font-size:6.3px;color:#000;">-40</div>
<div class="t" style="left:69.51px;top:502.07px;font-size:6.3px;color:#000;">-30</div>
<div class="t" style="left:90.85px;top:502.07px;font-size:6.3px;color:#000;">-20</div>
<div class="t" style="left:112.20px;top:502.07px;font-size:6.3px;color:#000;">-10</div>
<div class="t" style="left:138.14px;top:502.07px;font-size:6.3px;color:#000;">0</div>
<div class="t" style="left:157.74px;top:502.07px;font-size:6.3px;color:#000;">10</div>
<div class="t" style="left:179.08px;top:502.07px;font-size:6.3px;color:#000;">20</div>
<div class="t" style="left:200.43px;top:502.07px;font-size:6.3px;color:#000;">30</div>
<div class="t" style="left:221.78px;top:502.07px;font-size:6.3px;color:#000;">40</div>
<div class="t" style="left:243.12px;top:502.07px;font-size:6.3px;color:#000;">50</div>
<div class="t" style="left:264.47px;top:502.07px;font-size:6.3px;color:#000;">60</div>
<div class="t" style="left:285.81px;top:502.07px;font-size:6.3px;color:#000;">70</div>
<div class="t" style="left:307.16px;top:502.07px;font-size:6.3px;color:#000;">80</div>
<div class="t" style="left:328.51px;top:502.07px;font-size:6.3px;color:#000;">90</div>
<div class="t" style="left:348.10px;top:502.07px;font-size:6.3px;color:#000;">100</div>
<div class="t" style="left:369.68px;top:502.07px;font-size:6.3px;color:#000;">110</div>
<div class="t" style="left:390.79px;top:502.07px;font-size:6.3px;color:#000;">120</div>
<div class="t" style="left:412.14px;top:502.07px;font-size:6.3px;color:#000;">130</div>
<div class="t" style="left:433.49px;top:502.07px;font-size:6.3px;color:#000;">140</div>
<div class="t" style="left:454.83px;top:502.07px;font-size:6.3px;color:#000;">150</div>
<div class="t" style="left:476.18px;top:502.07px;font-size:6.3px;color:#000;">160</div>
<div class="t" style="left:497.52px;top:502.07px;font-size:6.3px;color:#000;">170</div>
<div class="t" style="left:518.87px;top:502.07px;font-size:6.3px;color:#000;">180</div>
<div class="t" style="left:540.22px;top:502.07px;font-size:6.3px;color:#000;">190</div>
<div class="t" style="left:561.56px;top:502.07px;font-size:6.3px;color:#000;">200</div>
<div class="t" style="left:582.91px;top:502.07px;font-size:6.3px;color:#000;">210</div>
<div class="t" style="left:604.25px;top:502.07px;font-size:6.3px;color:#000;">220</div>
<div class="t" style="left:625.60px;top:502.07px;font-size:6.3px;color:#000;">230</div>
<div class="t" style="left:646.95px;top:502.07px;font-size:6.3px;color:#000;">240</div>
<div class="t" style="left:668.29px;top:502.07px;font-size:6.3px;color:#000;">250</div>
<div class="t" style="left:689.64px;top:502.07px;font-size:6.3px;color:#000;">260</div>
<div class="t" style="left:710.98px;top:502.07px;font-size:6.3px;color:#000;">270</div>
<div class="t" style="left:732.33px;top:502.07px;font-size:6.3px;color:#000;">280</div>
<svg style="left:13.5px;top:501.5px" width="8" height="8"><circle cx="4" cy="4" r="2.6" fill="none" stroke="#444" stroke-width="0.8"/></svg>
<div class="a" style="left:14px;top:509.5px;width:734px;height:13.5px;background:linear-gradient(#7a7a7a,#6c6b6d)"></div>
<div class="a" style="left:19.6px;top:511.5px;width:14px;height:10px;background:linear-gradient(#3a3a3a,#262626);border:1px solid #151515;border-radius:2px;"></div>
<svg style="left:21.5px;top:512.7px" width="8" height="8"><circle cx="4" cy="4" r="3.3" fill="#f4f4f4" stroke="#222" stroke-width="0.4"/><path d="M4 4L5.5 1.5" stroke="#222" stroke-width="0.8"/></svg>
<svg style="left:28.5px;top:513.0px" width="4" height="7"><path d="M0 3 L2 0.3 L4 3Z M0 4 L2 6.7 L4 4Z" fill="#ddd"/></svg>
<svg style="left:36.5px;top:513px" width="8" height="8"><circle cx="4" cy="4" r="2.6" fill="#3a3a3a" opacity="0.5"/><circle cx="4" cy="4" r="1.8" fill="#5a5a5a" stroke="#e0e0e0" stroke-width="0.9"/></svg>
<div class="t" style="left:50.00px;top:514.42px;font-size:6px;color:#000;transform:scaleX(0.969);transform-origin:0 0;">View</div>
<div class="t" style="left:70.00px;top:514.42px;font-size:6px;color:#000;transform:scaleX(0.923);transform-origin:0 0;">Frame</div>
<div class="t" style="left:94.00px;top:514.42px;font-size:6px;color:#000;transform:scaleX(0.985);transform-origin:0 0;">Playback</div>
<div class="a" style="left:122.5px;top:511.8px;width:11px;height:9.6px;background:#8c8c8c;border:1px solid #333;border-radius:1px"></div>
<svg style="left:124px;top:513px" width="8" height="8"><circle cx="4" cy="4" r="3.3" fill="#f8f8f8" stroke="#333" stroke-width="0.4"/><path d="M2.5 2V6L6.5 4Z" fill="#f0a020"/></svg>
<div class="a" style="left:136.6px;top:511.8px;width:59px;height:9.6px;background:#b9b9b9;border:1px solid #262626;border-radius:4.5px;overflow:hidden"></div>
<div class="a" style="left:137.6px;top:512.8px;width:57px;height:7.6px;background:linear-gradient(#cdcdcd,#aeaeae);border-radius:3.5px;"></div>
<svg style="left:140.6px;top:514.8000000000001px" width="3" height="4"><path d="M2.5 0.2 L0.3 2 L2.5 3.8Z" fill="#8a8a8a"/></svg>
<svg style="left:189.1px;top:514.8000000000001px" width="3" height="4"><path d="M0.3 0.2 L2.5 2 L0.3 3.8Z" fill="#8a8a8a"/></svg>
<div class="t" style="left:156.43px;top:513.72px;font-size:6px;color:#000;">Start: 1</div>
<div class="a" style="left:195.4px;top:511.8px;width:56.4px;height:9.6px;background:#b9b9b9;border:1px solid #262626;border-radius:4.5px;overflow:hidden"></div>
<div class="a" style="left:196.4px;top:512.8px;width:54.4px;height:7.6px;background:linear-gradient(#cdcdcd,#aeaeae);border-radius:3.5px;"></div>
<svg style="left:199.4px;top:514.8000000000001px" width="3" height="4"><path d="M2.5 0.2 L0.3 2 L2.5 3.8Z" fill="#8a8a8a"/></svg>
<svg style="left:245.3px;top:514.8000000000001px" width="3" height="4"><path d="M0.3 0.2 L2.5 2 L0.3 3.8Z" fill="#8a8a8a"/></svg>
<div class="t" style="left:211.58px;top:513.72px;font-size:6px;color:#000;">End: 250</div>
<div class="a" style="left:195.5px;top:512px;width:1px;height:9.3px;background:#222;"></div>
<div class="a" style="left:255.4px;top:511.8px;width:44.4px;height:9.6px;background:#b9b9b9;border:1px solid #262626;border-radius:4.5px;overflow:hidden"></div>
<div class="a" style="left:256.4px;top:512.8px;width:42.4px;height:7.6px;background:linear-gradient(#cdcdcd,#aeaeae);border-radius:3.5px;"></div>
<svg style="left:259.4px;top:514.8000000000001px" width="3" height="4"><path d="M2.5 0.2 L0.3 2 L2.5 3.8Z" fill="#8a8a8a"/></svg>
<svg style="left:293.3px;top:514.8000000000001px" width="3" height="4"><path d="M0.3 0.2 L2.5 2 L0.3 3.8Z" fill="#8a8a8a"/></svg>
<div class="t" style="left:275.93px;top:513.72px;font-size:6px;color:#000;">1</div>
<div class="a" style="left:308.2px;top:511.8px;width:10.1px;height:9.6px;background:linear-gradient(#9c9c9c,#8a8a8a);border:1px solid #444"></div>
<div class="a" style="left:318.3px;top:511.8px;width:10.1px;height:9.6px;background:linear-gradient(#9c9c9c,#8a8a8a);border:1px solid #444"></div>
<div class="a" style="left:328.4px;top:511.8px;width:10.1px;height:9.6px;background:linear-gradient(#9c9c9c,#8a8a8a);border:1px solid #444"></div>
<div class="a" style="left:338.5px;top:511.8px;width:10.1px;height:9.6px;background:linear-gradient(#9c9c9c,#8a8a8a);border:1px solid #444"></div>
<div class="a" style="left:348.59999999999997px;top:511.8px;width:10.1px;height:9.6px;background:linear-gradient(#9c9c9c,#8a8a8a);border:1px solid #444"></div>
<div class="a" style="left:358.7px;top:511.8px;width:10.1px;height:9.6px;background:linear-gradient(#9c9c9c,#8a8a8a);border:1px solid #444"></div>
<svg style="left:310px;top:513.5px" width="60" height="7"><path d="M1 0.5V6M1 3.3L4 0.5V6Z M4 3.3L7 0.5V6Z" fill="#eee" stroke="#555" stroke-width="0.3"/><path d="M11 3.3L14 0.5V6Z M14 3.3L17 0.5V6Z" fill="#eee" stroke="#555" stroke-width="0.3"/><path d="M24 3.3L28 0.5V6Z" fill="#eee" stroke="#555" stroke-width="0.3"/><path d="M32 0.5V6L36 3.3Z" fill="#eee" stroke="#555" stroke-width="0.3"/><path d="M42 0.5V6L45 3.3Z M45 0.5V6L48 3.3Z" fill="#eee" stroke="#555" stroke-width="0.3"/><path d="M52 0.5V6L55 3.3Z M55 0.5V6L58 3.3Z M58 0.5V6" fill="#eee" stroke="#555" stroke-width="0.3"/></svg>
<div class="a" style="left:372.4px;top:511.8px;width:56px;height:9.6px;background:linear-gradient(#4a4a4a,#363636);border:1px solid #1e1e1e;border-radius:2px;"></div>
<svg style="left:421.4px;top:513.1px" width="4" height="7"><path d="M0 3 L2 0.3 L4 3Z M0 4 L2 6.7 L4 4Z" fill="#ddd"/></svg>
<div class="t" style="left:374.50px;top:514.02px;font-size:6px;color:#fff;">No Sync</div>
<div class="a" style="left:437.8px;top:511.8px;width:8.5px;height:9.6px;background:#9a9a9a;border:1px solid #444"></div>
<svg style="left:438.8px;top:513.2px" width="7" height="7"><circle cx="3.2" cy="3.5" r="2.6" fill="#e02a1a" stroke="#611" stroke-width="0.4"/></svg>
<div class="a" style="left:446.3px;top:511.8px;width:11.5px;height:9.6px;background:linear-gradient(#b0a8b8,#9890a0);border:1px solid #444"></div>
<svg style="left:448px;top:513px" width="8" height="8"><path d="M1 7L5.5 2.5" stroke="#444" stroke-width="1.2"/><circle cx="6" cy="2" r="1.6" fill="none" stroke="#444" stroke-width="0.9"/></svg>
<div class="a" style="left:460.6px;top:511.8px;width:53px;height:9.6px;background:linear-gradient(#c8c8d0,#b8b0c0);border:1px solid #444"></div>
<svg style="left:462px;top:513px" width="8" height="8"><path d="M1 7L5.5 2.5" stroke="#444" stroke-width="1.2"/><circle cx="6" cy="2" r="1.6" fill="none" stroke="#444" stroke-width="0.9"/></svg>
<div class="a" style="left:513.5px;top:511.8px;width:10px;height:9.6px;background:#a8a0b0;border:1px solid #444"></div>
<svg style="left:515px;top:513px" width="8" height="8"><path d="M1 7L5.5 2.5" stroke="#444" stroke-width="1.2"/><circle cx="6" cy="2" r="1.6" fill="none" stroke="#444" stroke-width="0.9"/></svg>
<div class="a" style="left:523.5px;top:511.8px;width:10px;height:9.6px;background:#a8a0b0;border:1px solid #444"></div>
<svg style="left:525px;top:513px" width="7" height="7"><path d="M1 1L6 6M6 1L1 6" stroke="#d02040" stroke-width="1.6"/></svg>
</body></html>
